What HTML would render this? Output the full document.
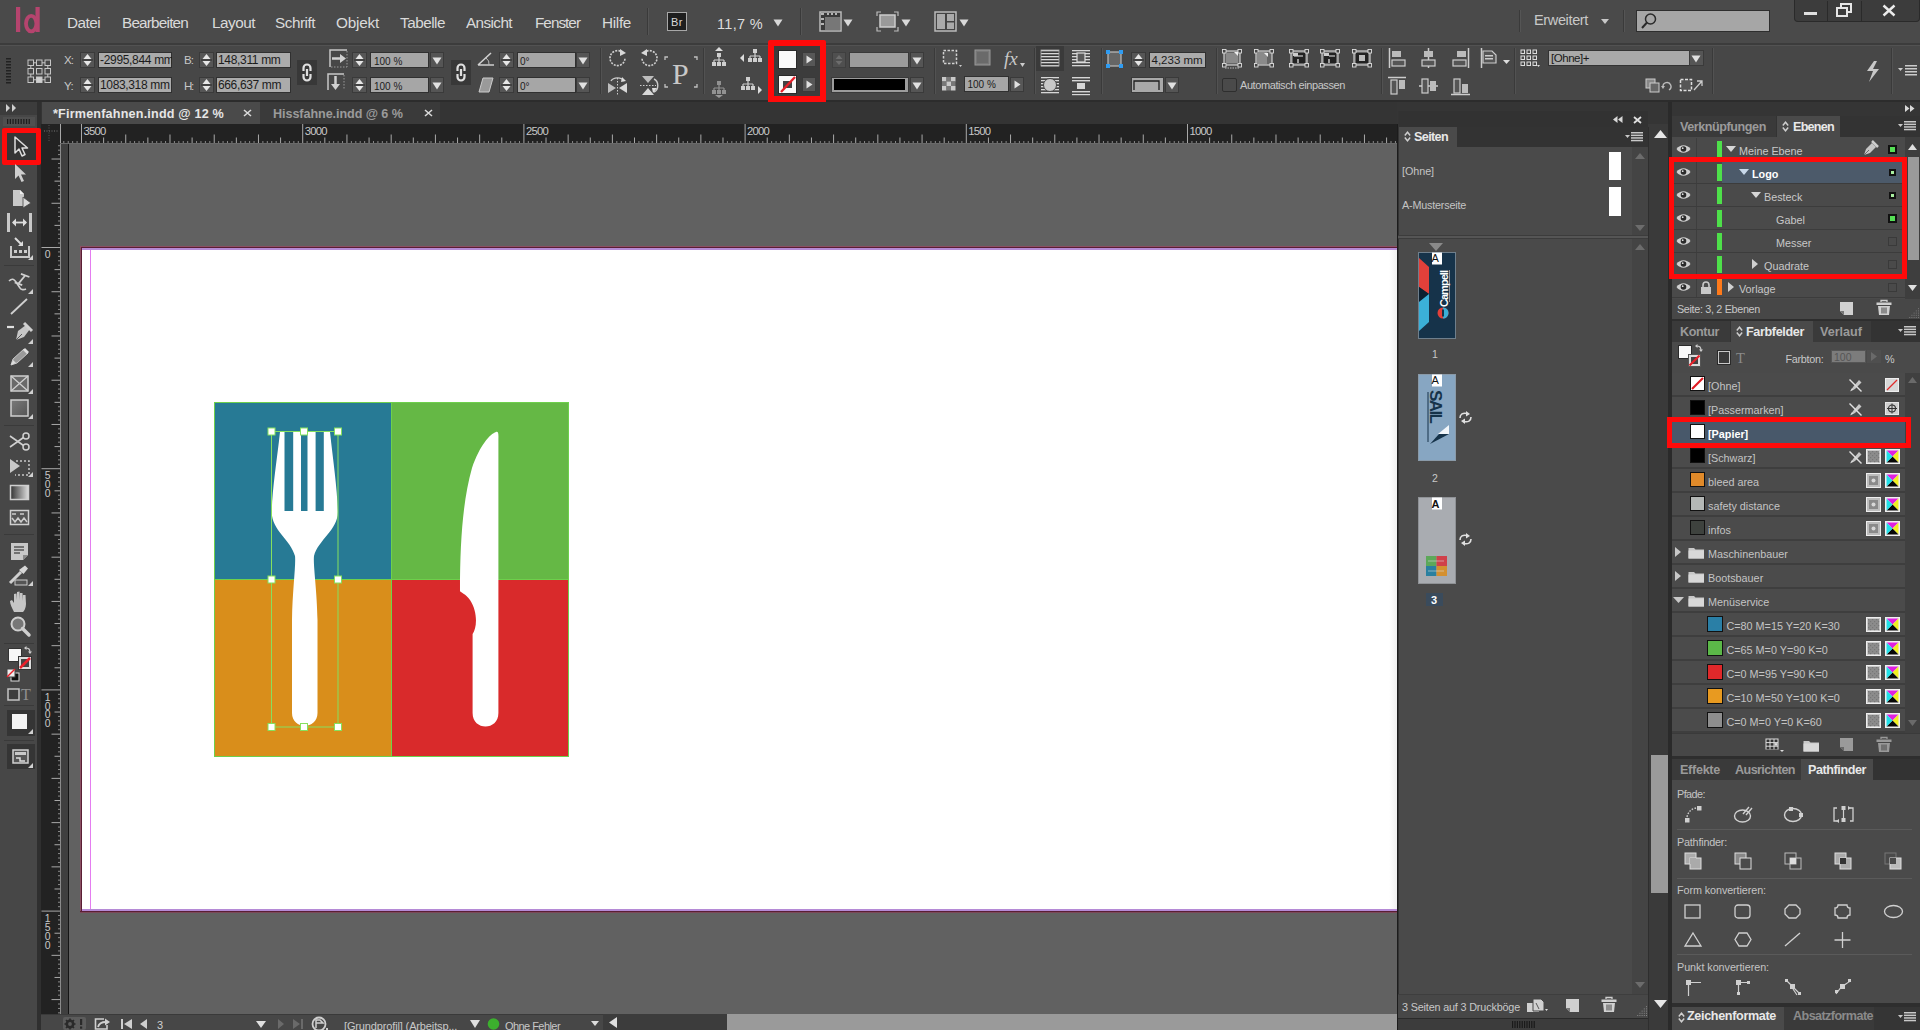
<!DOCTYPE html>
<html><head><meta charset="utf-8"><style>*{margin:0;padding:0;box-sizing:border-box}
html,body{width:1920px;height:1030px;overflow:hidden;background:#474747;font-family:"Liberation Sans",sans-serif;color:#d0d0d0;position:relative}
.a{position:absolute}
.t{position:absolute;white-space:nowrap;line-height:1}
svg{overflow:visible}
</style></head><body>
<!-- s1_menu -->
<div class="a" style="left:0px;top:0px;width:1920px;height:43px;background:#4a4a4a;"></div>
<div class="a" style="left:0px;top:43px;width:1920px;height:2px;background:#3c3c3c;"></div>
<svg class="a" style="left:12px;top:4px;" width="32" height="32" viewBox="0 0 32 32"><rect x="4" y="3" width="4.2" height="25" fill="#b5446e"/><rect x="23.5" y="3" width="4.2" height="25" fill="#b5446e"/><ellipse cx="19.2" cy="19.6" rx="5.2" ry="7.8" fill="none" stroke="#b5446e" stroke-width="3.8"/></svg>
<div class="t" style="left:67.0px;top:14.5px;font-size:15.3px;color:#dadada;letter-spacing:-0.54px;">Datei</div>
<div class="t" style="left:122.0px;top:14.5px;font-size:15.3px;color:#dadada;letter-spacing:-0.80px;">Bearbeiten</div>
<div class="t" style="left:212.0px;top:14.5px;font-size:15.3px;color:#dadada;letter-spacing:-0.49px;">Layout</div>
<div class="t" style="left:275.0px;top:14.5px;font-size:15.3px;color:#dadada;letter-spacing:-0.48px;">Schrift</div>
<div class="t" style="left:336.0px;top:14.5px;font-size:15.3px;color:#dadada;letter-spacing:-0.20px;">Objekt</div>
<div class="t" style="left:400.0px;top:14.5px;font-size:15.3px;color:#dadada;letter-spacing:-0.50px;">Tabelle</div>
<div class="t" style="left:466.0px;top:14.5px;font-size:15.3px;color:#dadada;letter-spacing:-0.60px;">Ansicht</div>
<div class="t" style="left:535.0px;top:14.5px;font-size:15.3px;color:#dadada;letter-spacing:-0.98px;">Fenster</div>
<div class="t" style="left:602.0px;top:14.5px;font-size:15.3px;color:#dadada;letter-spacing:-0.32px;">Hilfe</div>
<div class="a" style="left:647px;top:8px;width:1px;height:27px;background:#3a3a3a;"></div>
<div class="a" style="left:648px;top:8px;width:1px;height:27px;background:#555;"></div>
<div class="a" style="left:667px;top:12px;width:20px;height:19px;background:#1e1e1e;border:1.5px solid #a8a8a8"></div>
<div class="t" style="left:671.0px;top:16.7px;font-size:11px;color:#d8d8d8;letter-spacing:0.50px;">Br</div>
<div class="t" style="left:717.0px;top:16.7px;font-size:14.5px;color:#dedede;letter-spacing:0.32px;">11,7 %</div>
<svg class="a" style="left:773px;top:19px;" width="10" height="8" viewBox="0 0 10 8"><path d="M0.5 0.5 L9.5 0.5 L5 7.5Z" fill="#d8d8d8"/></svg>
<div class="a" style="left:800px;top:8px;width:1px;height:27px;background:#3a3a3a;"></div>
<div class="a" style="left:801px;top:8px;width:1px;height:27px;background:#555;"></div>
<svg class="a" style="left:819px;top:11px;" width="24" height="22" viewBox="0 0 24 22"><rect x="1" y="1" width="21" height="19" fill="#3a3a3a" stroke="#bbb" stroke-width="1.5"/><rect x="6" y="6" width="15" height="13" fill="#777"/><path d="M2 3h3M2 8h3M2 13h3M8 3h2M12 3h2M16 3h2" stroke="#ddd" stroke-width="1.5"/></svg>
<svg class="a" style="left:843px;top:19px;" width="10" height="8" viewBox="0 0 10 8"><path d="M0.5 0.5 L9.5 0.5 L5 7.5Z" fill="#d8d8d8"/></svg>
<svg class="a" style="left:876px;top:11px;" width="24" height="22" viewBox="0 0 24 22"><rect x="4" y="4" width="15" height="12" fill="#9a9a9a" stroke="#ccc" stroke-width="1.5"/><path d="M1 5V1h4M18 1h4v4M1 16v4h4M22 16v4h-4" fill="none" stroke="#bbb" stroke-width="1.2"/></svg>
<svg class="a" style="left:901px;top:19px;" width="10" height="8" viewBox="0 0 10 8"><path d="M0.5 0.5 L9.5 0.5 L5 7.5Z" fill="#d8d8d8"/></svg>
<svg class="a" style="left:934px;top:11px;" width="24" height="22" viewBox="0 0 24 22"><rect x="1" y="1" width="21" height="19" fill="#444" stroke="#bbb" stroke-width="1.5"/><rect x="3" y="3" width="8" height="15" fill="#aaa"/><rect x="13" y="3" width="7" height="7" fill="#aaa"/><rect x="13" y="11.5" width="7" height="6.5" fill="#aaa"/></svg>
<svg class="a" style="left:959px;top:19px;" width="10" height="8" viewBox="0 0 10 8"><path d="M0.5 0.5 L9.5 0.5 L5 7.5Z" fill="#d8d8d8"/></svg>
<div class="a" style="left:1519px;top:10px;width:1px;height:22px;background:#3a3a3a;"></div>
<div class="a" style="left:1520px;top:10px;width:1px;height:22px;background:#555;"></div>
<div class="t" style="left:1534.0px;top:13.2px;font-size:14.5px;color:#c8c8c8;letter-spacing:-0.36px;">Erweitert</div>
<svg class="a" style="left:1601px;top:19px;" width="8" height="5" viewBox="0 0 8 5"><path d="M0 0 L8 0 L4 5Z" fill="#c8c8c8"/></svg>
<div class="a" style="left:1623px;top:10px;width:1px;height:22px;background:#3a3a3a;"></div>
<div class="a" style="left:1624px;top:10px;width:1px;height:22px;background:#555;"></div>
<div class="a" style="left:1636px;top:10px;width:134px;height:22px;background:#a6a6a6;border:1px solid #2e2e2e"></div>
<svg class="a" style="left:1640px;top:12px;" width="18" height="18" viewBox="0 0 18 18"><circle cx="10.5" cy="7" r="5" fill="none" stroke="#2a2a2a" stroke-width="1.5"/><path d="M7 10.5 L2 16" stroke="#2a2a2a" stroke-width="2"/></svg>
<div class="a" style="left:1794px;top:0px;width:126px;height:22px;background:#3c3c3c;border-radius:0 0 4px 4px;border:1px solid #2a2a2a;border-top:none"></div>
<div class="a" style="left:1827px;top:1px;width:1px;height:20px;background:#2a2a2a;"></div>
<div class="a" style="left:1861px;top:1px;width:1px;height:20px;background:#2a2a2a;"></div>
<div class="a" style="left:1804px;top:12px;width:13px;height:3px;background:#e0e0e0;"></div>
<svg class="a" style="left:1836px;top:3px;" width="18" height="15" viewBox="0 0 18 15"><rect x="5" y="1" width="10" height="8" fill="none" stroke="#e6e6e6" stroke-width="2"/><rect x="1" y="5" width="10" height="8" fill="#3c3c3c" stroke="#e6e6e6" stroke-width="2"/></svg>
<svg class="a" style="left:1882px;top:4px;" width="14" height="13" viewBox="0 0 14 13"><path d="M1.5 1.5 L12.5 11.5 M12.5 1.5 L1.5 11.5" stroke="#ececec" stroke-width="2.4"/></svg>
<!-- s2_ctrl -->
<div class="a" style="left:0px;top:45px;width:1920px;height:55px;background:#474747;"></div>
<div class="a" style="left:0px;top:45px;width:1920px;height:1px;background:#525252;"></div>
<svg class="a" style="left:5px;top:58px;" width="8" height="27" viewBox="0 0 8 27"><rect x="1" y="0" width="5" height="1.5" fill="#222"/><rect x="1" y="3" width="5" height="1.5" fill="#222"/><rect x="1" y="6" width="5" height="1.5" fill="#222"/><rect x="1" y="9" width="5" height="1.5" fill="#222"/><rect x="1" y="12" width="5" height="1.5" fill="#222"/><rect x="1" y="15" width="5" height="1.5" fill="#222"/><rect x="1" y="18" width="5" height="1.5" fill="#222"/><rect x="1" y="21" width="5" height="1.5" fill="#222"/><rect x="1" y="24" width="5" height="1.5" fill="#222"/></svg>
<svg class="a" style="left:27px;top:59px;" width="24" height="24" viewBox="0 0 24 24"><rect x="1.0" y="1.0" width="5.5" height="5.5" fill="none" stroke="#c6c6c6" stroke-width="1"/><rect x="9.5" y="1.0" width="5.5" height="5.5" fill="none" stroke="#c6c6c6" stroke-width="1"/><rect x="18.0" y="1.0" width="5.5" height="5.5" fill="none" stroke="#c6c6c6" stroke-width="1"/><rect x="1.0" y="9.5" width="5.5" height="5.5" fill="none" stroke="#c6c6c6" stroke-width="1"/><rect x="9.5" y="9.5" width="5.5" height="5.5" fill="none" stroke="#c6c6c6" stroke-width="1"/><rect x="18.0" y="9.5" width="5.5" height="5.5" fill="none" stroke="#c6c6c6" stroke-width="1"/><rect x="1.0" y="18.0" width="5.5" height="5.5" fill="none" stroke="#c6c6c6" stroke-width="1"/><rect x="9.5" y="18.0" width="5.5" height="5.5" fill="#cfcfcf" stroke="#c6c6c6" stroke-width="1"/><rect x="18.0" y="18.0" width="5.5" height="5.5" fill="none" stroke="#c6c6c6" stroke-width="1"/><path d="M6.5 3.8h3M15 3.8h3M6.5 20.8h3M15 20.8h3M3.8 6.5v3M3.8 15v3M20.8 6.5v3M20.8 15v3" stroke="#c6c6c6" stroke-width="1"/></svg>
<div class="t" style="left:64.0px;top:54.2px;font-size:11.6px;color:#c8c8c8;letter-spacing:-0.98px;">X:</div>
<div class="t" style="left:64.0px;top:80.2px;font-size:11.6px;color:#c8c8c8;letter-spacing:-0.66px;">Y:</div>
<div class="a" style="left:80px;top:52px;width:15px;height:16px;background:#565656;border:1px solid #3a3a3a"></div>
<svg class="a" style="left:80px;top:52px;" width="15" height="16" viewBox="0 0 15 16"><path d="M3.5 7 L7.5 2 L11.5 7Z" fill="#e6e6e6"/><path d="M3.5 9 L7.5 14 L11.5 9Z" fill="#e6e6e6"/><rect x="2" y="7.5" width="11" height="1" fill="#2e2e2e"/></svg>
<div class="a" style="left:98px;top:52px;width:74px;height:16px;background:#ababab;border:1px solid #303030;overflow:hidden"></div>
<div class="a" style="left:98px;top:52px;width:74px;height:16px;overflow:hidden"><div class="t" style="left:2.0px;top:2.1px;font-size:12px;color:#1c1c1c;letter-spacing:-0.32px;">-2995,844 mm</div>
</div>
<div class="a" style="left:80px;top:77px;width:15px;height:16px;background:#565656;border:1px solid #3a3a3a"></div>
<svg class="a" style="left:80px;top:77px;" width="15" height="16" viewBox="0 0 15 16"><path d="M3.5 7 L7.5 2 L11.5 7Z" fill="#e6e6e6"/><path d="M3.5 9 L7.5 14 L11.5 9Z" fill="#e6e6e6"/><rect x="2" y="7.5" width="11" height="1" fill="#2e2e2e"/></svg>
<div class="a" style="left:98px;top:77px;width:74px;height:16px;background:#ababab;border:1px solid #303030;overflow:hidden"></div>
<div class="a" style="left:98px;top:77px;width:74px;height:16px;overflow:hidden"><div class="t" style="left:2.0px;top:2.1px;font-size:12px;color:#1c1c1c;letter-spacing:-0.35px;">1083,318 mm</div>
</div>
<div class="t" style="left:184.0px;top:54.2px;font-size:11.6px;color:#c8c8c8;letter-spacing:-0.98px;">B:</div>
<div class="t" style="left:184.0px;top:80.2px;font-size:11.6px;color:#c8c8c8;letter-spacing:-1.30px;">H:</div>
<div class="a" style="left:199px;top:52px;width:15px;height:16px;background:#565656;border:1px solid #3a3a3a"></div>
<svg class="a" style="left:199px;top:52px;" width="15" height="16" viewBox="0 0 15 16"><path d="M3.5 7 L7.5 2 L11.5 7Z" fill="#e6e6e6"/><path d="M3.5 9 L7.5 14 L11.5 9Z" fill="#e6e6e6"/><rect x="2" y="7.5" width="11" height="1" fill="#2e2e2e"/></svg>
<div class="a" style="left:216px;top:52px;width:75px;height:16px;background:#ababab;border:1px solid #303030;overflow:hidden"></div>
<div class="a" style="left:216px;top:52px;width:75px;height:16px;overflow:hidden"><div class="t" style="left:2.0px;top:2.1px;font-size:12px;color:#1c1c1c;letter-spacing:-0.33px;">148,311 mm</div>
</div>
<div class="a" style="left:199px;top:77px;width:15px;height:16px;background:#565656;border:1px solid #3a3a3a"></div>
<svg class="a" style="left:199px;top:77px;" width="15" height="16" viewBox="0 0 15 16"><path d="M3.5 7 L7.5 2 L11.5 7Z" fill="#e6e6e6"/><path d="M3.5 9 L7.5 14 L11.5 9Z" fill="#e6e6e6"/><rect x="2" y="7.5" width="11" height="1" fill="#2e2e2e"/></svg>
<div class="a" style="left:216px;top:77px;width:75px;height:16px;background:#ababab;border:1px solid #303030;overflow:hidden"></div>
<div class="a" style="left:216px;top:77px;width:75px;height:16px;overflow:hidden"><div class="t" style="left:2.0px;top:2.1px;font-size:12px;color:#1c1c1c;letter-spacing:-0.37px;">666,637 mm</div>
</div>
<svg class="a" style="left:297px;top:60px;" width="20" height="25" viewBox="0 0 20 25"><rect width="20" height="25" fill="#383838"/><path d="M6.5 11 V8 a3.5 3.5 0 0 1 7 0 V11 M6.5 14 V17 a3.5 3.5 0 0 0 7 0 V14 M10 9 V16" fill="none" stroke="#e0e0e0" stroke-width="2.2"/></svg>
<svg class="a" style="left:329px;top:49px;" width="20" height="19" viewBox="0 0 20 19"><path d="M1 18V1h17" fill="none" stroke="#c8c8c8" stroke-width="1.5"/><path d="M18 2v16M2 18h16" stroke="#999" stroke-width="1" stroke-dasharray="1.5 1.5"/><path d="M3 9.5h9" stroke="#d0d0d0" stroke-width="2.5"/><path d="M11 5 L17 9.5 L11 14Z" fill="#d0d0d0"/></svg>
<svg class="a" style="left:327px;top:73px;" width="18" height="18" viewBox="0 0 18 18"><path d="M1 17V1h16" fill="none" stroke="#c8c8c8" stroke-width="1.5"/><path d="M17 2v15" stroke="#999" stroke-width="1" stroke-dasharray="1.5 1.5"/><path d="M8.5 3v9" stroke="#d0d0d0" stroke-width="2.5"/><path d="M4 11 L8.5 17 L13 11Z" fill="#d0d0d0"/></svg>
<div class="a" style="left:352px;top:52px;width:15px;height:16px;background:#565656;border:1px solid #3a3a3a"></div>
<svg class="a" style="left:352px;top:52px;" width="15" height="16" viewBox="0 0 15 16"><path d="M3.5 7 L7.5 2 L11.5 7Z" fill="#e6e6e6"/><path d="M3.5 9 L7.5 14 L11.5 9Z" fill="#e6e6e6"/><rect x="2" y="7.5" width="11" height="1" fill="#2e2e2e"/></svg>
<div class="a" style="left:370px;top:52px;width:59px;height:16px;background:#a6a6a6;border:1px solid #303030;overflow:hidden"></div>
<div class="a" style="left:370px;top:52px;width:59px;height:16px;overflow:hidden"><div class="t" style="left:4.0px;top:4.5px;font-size:10px;color:#1c1c1c;">100 %</div>
</div>
<div class="a" style="left:430px;top:52px;width:14px;height:16px;background:#555;border:1px solid #3a3a3a"></div>
<svg class="a" style="left:432px;top:57px;" width="10" height="8" viewBox="0 0 10 8"><path d="M0.5 0.5 L9.5 0.5 L5 7.5Z" fill="#e0e0e0"/></svg>
<div class="a" style="left:352px;top:77px;width:15px;height:16px;background:#565656;border:1px solid #3a3a3a"></div>
<svg class="a" style="left:352px;top:77px;" width="15" height="16" viewBox="0 0 15 16"><path d="M3.5 7 L7.5 2 L11.5 7Z" fill="#e6e6e6"/><path d="M3.5 9 L7.5 14 L11.5 9Z" fill="#e6e6e6"/><rect x="2" y="7.5" width="11" height="1" fill="#2e2e2e"/></svg>
<div class="a" style="left:370px;top:77px;width:59px;height:16px;background:#a6a6a6;border:1px solid #303030;overflow:hidden"></div>
<div class="a" style="left:370px;top:77px;width:59px;height:16px;overflow:hidden"><div class="t" style="left:4.0px;top:5.0px;font-size:10px;color:#1c1c1c;">100 %</div>
</div>
<div class="a" style="left:430px;top:77px;width:14px;height:16px;background:#555;border:1px solid #3a3a3a"></div>
<svg class="a" style="left:432px;top:82px;" width="10" height="8" viewBox="0 0 10 8"><path d="M0.5 0.5 L9.5 0.5 L5 7.5Z" fill="#e0e0e0"/></svg>
<svg class="a" style="left:451px;top:60px;" width="20" height="25" viewBox="0 0 20 25"><rect width="20" height="25" fill="#383838"/><path d="M6.5 11 V8 a3.5 3.5 0 0 1 7 0 V11 M6.5 14 V17 a3.5 3.5 0 0 0 7 0 V14 M10 9 V16" fill="none" stroke="#e0e0e0" stroke-width="2.2"/></svg>
<svg class="a" style="left:477px;top:51px;" width="18" height="15" viewBox="0 0 18 15"><path d="M1 14 L14 2 M1 14 H17" stroke="#d0d0d0" stroke-width="1.6" fill="none"/><path d="M9 7 A7 7 0 0 1 12 14" fill="none" stroke="#bbb" stroke-width="1"/></svg>
<svg class="a" style="left:478px;top:77px;" width="16" height="16" viewBox="0 0 16 16"><path d="M1 15 L5 1 H15 L11 15Z" fill="#9a9a9a" stroke="#ccc" stroke-width="1"/></svg>
<div class="a" style="left:499px;top:52px;width:15px;height:16px;background:#565656;border:1px solid #3a3a3a"></div>
<svg class="a" style="left:499px;top:52px;" width="15" height="16" viewBox="0 0 15 16"><path d="M3.5 7 L7.5 2 L11.5 7Z" fill="#e6e6e6"/><path d="M3.5 9 L7.5 14 L11.5 9Z" fill="#e6e6e6"/><rect x="2" y="7.5" width="11" height="1" fill="#2e2e2e"/></svg>
<div class="a" style="left:517px;top:52px;width:59px;height:16px;background:#a6a6a6;border:1px solid #303030;overflow:hidden"></div>
<div class="a" style="left:517px;top:52px;width:59px;height:16px;overflow:hidden"><div class="t" style="left:3.0px;top:4.5px;font-size:10px;color:#1c1c1c;">0°</div>
</div>
<div class="a" style="left:576px;top:52px;width:14px;height:16px;background:#555;border:1px solid #3a3a3a"></div>
<svg class="a" style="left:578px;top:57px;" width="10" height="8" viewBox="0 0 10 8"><path d="M0.5 0.5 L9.5 0.5 L5 7.5Z" fill="#e0e0e0"/></svg>
<div class="a" style="left:499px;top:77px;width:15px;height:16px;background:#565656;border:1px solid #3a3a3a"></div>
<svg class="a" style="left:499px;top:77px;" width="15" height="16" viewBox="0 0 15 16"><path d="M3.5 7 L7.5 2 L11.5 7Z" fill="#e6e6e6"/><path d="M3.5 9 L7.5 14 L11.5 9Z" fill="#e6e6e6"/><rect x="2" y="7.5" width="11" height="1" fill="#2e2e2e"/></svg>
<div class="a" style="left:517px;top:77px;width:59px;height:16px;background:#a6a6a6;border:1px solid #303030;overflow:hidden"></div>
<div class="a" style="left:517px;top:77px;width:59px;height:16px;overflow:hidden"><div class="t" style="left:3.0px;top:5.0px;font-size:10px;color:#1c1c1c;">0°</div>
</div>
<div class="a" style="left:576px;top:77px;width:14px;height:16px;background:#555;border:1px solid #3a3a3a"></div>
<svg class="a" style="left:578px;top:82px;" width="10" height="8" viewBox="0 0 10 8"><path d="M0.5 0.5 L9.5 0.5 L5 7.5Z" fill="#e0e0e0"/></svg>
<div class="a" style="left:600px;top:48px;width:1px;height:46px;background:#3a3a3a;"></div>
<div class="a" style="left:601px;top:48px;width:1px;height:46px;background:#525252;"></div>
<svg class="a" style="left:608px;top:48px;" width="20" height="19" viewBox="0 0 20 19"><path d="M15 5 A7.5 7.5 0 1 0 17 10" fill="none" stroke="#cfcfcf" stroke-width="1.6" stroke-dasharray="2 1.2"/><path d="M12 1 L18 5 L12 8Z" fill="#d8d8d8"/></svg>
<svg class="a" style="left:639px;top:48px;" width="20" height="19" viewBox="0 0 20 19"><g transform="translate(20,0) scale(-1,1)"><path d="M15 5 A7.5 7.5 0 1 0 17 10" fill="none" stroke="#cfcfcf" stroke-width="1.6" stroke-dasharray="2 1.2"/><path d="M12 1 L18 5 L12 8Z" fill="#d8d8d8"/></g></svg>
<svg class="a" style="left:607px;top:75px;" width="21" height="21" viewBox="0 0 21 21"><path d="M1 8 L9 13 L1 18Z" fill="#bdbdbd"/><path d="M20 8 L12 13 L20 18Z" fill="#d8d8d8"/><path d="M10.5 3v18" stroke="#ccc" stroke-dasharray="1.5 1.5"/><path d="M4 6 A7 5 0 0 1 17 6" fill="none" stroke="#ccc" stroke-width="1.4"/><path d="M15 2 L19 6 L14 7Z" fill="#ddd"/></svg>
<svg class="a" style="left:639px;top:75px;" width="21" height="21" viewBox="0 0 21 21"><path d="M3 1 L15 1 L9 8Z" fill="#bdbdbd"/><path d="M3 20 L15 20 L9 13Z" fill="#d8d8d8"/><path d="M1 10.5h16" stroke="#ccc" stroke-dasharray="1.5 1.5"/><path d="M15 4 A6 7 0 0 1 15 17" fill="none" stroke="#ccc" stroke-width="1.4"/><path d="M18 13 L14 18 L13 13Z" fill="#ddd"/></svg>
<svg class="a" style="left:664px;top:56px;" width="34" height="32" viewBox="0 0 34 32"><path d="M1 4V1h3M30 1h3v3M1 28v3h3M33 28v3h-3" fill="none" stroke="#c0c0c0" stroke-width="1.3"/></svg>
<div class="t" style="left:672.0px;top:58.6px;font-size:30px;color:#c8c8c8;font-family:'Liberation Serif',serif;">P</div>
<div class="a" style="left:703px;top:48px;width:1px;height:46px;background:#3a3a3a;"></div>
<div class="a" style="left:704px;top:48px;width:1px;height:46px;background:#525252;"></div>
<svg class="a" style="left:711px;top:47px;" width="17" height="20" viewBox="0 0 17 20"><path d="M4 4 L8 0 L12 4Z" fill="#dcdcdc"/><rect x="6" y="6" width="4" height="4" fill="#cfcfcf"/><path d="M8 10v3M3 13h10M3 13v3M8 13v3M13 13v3" stroke="#cfcfcf" stroke-width="1.2" fill="none"/><rect x="1" y="15" width="4" height="4" fill="#cfcfcf"/><rect x="6" y="15" width="4" height="4" fill="#cfcfcf"/><rect x="11" y="15" width="4" height="4" fill="#cfcfcf"/></svg>
<svg class="a" style="left:740px;top:47px;" width="24" height="20" viewBox="0 0 24 20"><path d="M0 11 L4 7 L4 15Z" fill="#dcdcdc"/><g transform="translate(7,-4)"><rect x="6" y="6" width="4" height="4" fill="#cfcfcf"/><path d="M8 10v3M3 13h10M3 13v3M8 13v3M13 13v3" stroke="#cfcfcf" stroke-width="1.2" fill="none"/><rect x="1" y="15" width="4" height="4" fill="#cfcfcf"/><rect x="6" y="15" width="4" height="4" fill="#cfcfcf"/><rect x="11" y="15" width="4" height="4" fill="#cfcfcf"/></g></svg>
<svg class="a" style="left:711px;top:75px;" width="17" height="21" viewBox="0 0 17 21"><g opacity="0.55"><rect x="6" y="6" width="4" height="4" fill="#cfcfcf"/><path d="M8 10v3M3 13h10M3 13v3M8 13v3M13 13v3" stroke="#cfcfcf" stroke-width="1.2" fill="none"/><rect x="1" y="15" width="4" height="4" fill="#cfcfcf"/><rect x="6" y="15" width="4" height="4" fill="#cfcfcf"/><rect x="11" y="15" width="4" height="4" fill="#cfcfcf"/><path d="M4 20 L8 23 L12 20Z" fill="#dcdcdc"/></g></svg>
<svg class="a" style="left:740px;top:75px;" width="24" height="21" viewBox="0 0 24 21"><g transform="translate(0,-4)"><rect x="6" y="6" width="4" height="4" fill="#cfcfcf"/><path d="M8 10v3M3 13h10M3 13v3M8 13v3M13 13v3" stroke="#cfcfcf" stroke-width="1.2" fill="none"/><rect x="1" y="15" width="4" height="4" fill="#cfcfcf"/><rect x="6" y="15" width="4" height="4" fill="#cfcfcf"/><rect x="11" y="15" width="4" height="4" fill="#cfcfcf"/></g><path d="M18 11 L22 15 L18 19Z" fill="#dcdcdc"/></svg>
<div class="a" style="left:773px;top:46px;width:48px;height:50px;background:#3c3c3c;"></div>
<div class="a" style="left:778px;top:50px;width:19px;height:19px;background:#fafafa;border:1px solid #2a2a2a"></div>
<div class="a" style="left:802px;top:52px;width:14px;height:15px;background:#575757;border:1px solid #3a3a3a"></div>
<svg class="a" style="left:806px;top:55px;" width="7" height="9" viewBox="0 0 7 9"><path d="M0.5 0.5 L6.5 4.5 L0.5 8.5Z" fill="#e0e0e0"/></svg>
<div class="a" style="left:778px;top:75px;width:19px;height:19px;background:#fafafa;border:1px solid #2a2a2a"></div>
<svg class="a" style="left:778px;top:75px;" width="19" height="19" viewBox="0 0 19 19"><rect x="5" y="6" width="9" height="7" fill="#444"/><path d="M3 17 L17 2" stroke="#e8202a" stroke-width="2.4"/></svg>
<div class="a" style="left:802px;top:77px;width:14px;height:15px;background:#575757;border:1px solid #3a3a3a"></div>
<svg class="a" style="left:806px;top:80px;" width="7" height="9" viewBox="0 0 7 9"><path d="M0.5 0.5 L6.5 4.5 L0.5 8.5Z" fill="#e0e0e0"/></svg>
<div class="a" style="left:768px;top:40px;width:58px;height:62px;background:transparent;border:6px solid #ff0a0a;border-radius:2px"></div>
<div class="a" style="left:832px;top:52px;width:14px;height:16px;background:#4f4f4f;border:1px solid #3f3f3f"></div>
<svg class="a" style="left:832px;top:52px;" width="14" height="16" viewBox="0 0 14 16"><path d="M3.5 7 L7 3 L10.5 7Z" fill="#6d6d6d"/><path d="M3.5 9 L7 13 L10.5 9Z" fill="#6d6d6d"/></svg>
<div class="a" style="left:849px;top:52px;width:60px;height:16px;background:#9c9c9c;border:1px solid #3a3a3a"></div>
<div class="a" style="left:910px;top:52px;width:14px;height:16px;background:#555;border:1px solid #3a3a3a"></div>
<svg class="a" style="left:912px;top:57px;" width="10" height="8" viewBox="0 0 10 8"><path d="M0.5 0.5 L9.5 0.5 L5 7.5Z" fill="#e0e0e0"/></svg>
<div class="a" style="left:831px;top:77px;width:78px;height:16px;background:#9c9c9c;border:1px solid #3a3a3a"></div>
<div class="a" style="left:834px;top:79px;width:71px;height:11px;background:#000;"></div>
<div class="a" style="left:910px;top:77px;width:14px;height:16px;background:#555;border:1px solid #3a3a3a"></div>
<svg class="a" style="left:912px;top:82px;" width="10" height="8" viewBox="0 0 10 8"><path d="M0.5 0.5 L9.5 0.5 L5 7.5Z" fill="#e0e0e0"/></svg>
<div class="a" style="left:934px;top:48px;width:1px;height:46px;background:#3a3a3a;"></div>
<div class="a" style="left:935px;top:48px;width:1px;height:46px;background:#525252;"></div>
<svg class="a" style="left:942px;top:49px;" width="22" height="19" viewBox="0 0 22 19"><rect x="1.5" y="1.5" width="13" height="13" fill="#555" stroke="#d0d0d0" stroke-width="1.5" stroke-dasharray="2.5 1.5"/><path d="M17 16 L20 16 L18.5 18Z" fill="#ccc"/></svg>
<svg class="a" style="left:974px;top:49px;" width="18" height="17" viewBox="0 0 18 17"><rect x="1" y="1" width="15" height="15" fill="#777" stroke="#9a9a9a" stroke-width="1"/><rect x="3" y="3" width="11" height="11" fill="#6a6a6a"/></svg>
<div class="t" style="left:1004.0px;top:48.9px;font-size:19px;color:#c8c8c8;font-style:italic;font-family:'Liberation Serif',serif;">fx</div>
<svg class="a" style="left:1020px;top:63px;" width="5" height="4" viewBox="0 0 5 4"><path d="M0 0 L5 0 L2.5 4Z" fill="#ccc"/></svg>
<svg class="a" style="left:941px;top:76px;" width="16" height="16" viewBox="0 0 16 16"><rect x="1.0" y="1.0" width="4.5" height="4.5" fill="#c8c8c8"/><rect x="5.5" y="1.0" width="4.5" height="4.5" fill="#777"/><rect x="10.0" y="1.0" width="4.5" height="4.5" fill="#c8c8c8"/><rect x="1.0" y="5.5" width="4.5" height="4.5" fill="#777"/><rect x="5.5" y="5.5" width="4.5" height="4.5" fill="#c8c8c8"/><rect x="10.0" y="5.5" width="4.5" height="4.5" fill="#777"/><rect x="1.0" y="10.0" width="4.5" height="4.5" fill="#c8c8c8"/><rect x="5.5" y="10.0" width="4.5" height="4.5" fill="#777"/><rect x="10.0" y="10.0" width="4.5" height="4.5" fill="#c8c8c8"/></svg>
<div class="a" style="left:964px;top:76px;width:45px;height:16px;background:#a6a6a6;border:1px solid #303030;overflow:hidden"></div>
<div class="a" style="left:964px;top:76px;width:45px;height:16px;overflow:hidden"><div class="t" style="left:3.5px;top:4.0px;font-size:10px;color:#1c1c1c;">100 %</div>
</div>
<div class="a" style="left:1010px;top:77px;width:14px;height:15px;background:#575757;border:1px solid #3a3a3a"></div>
<svg class="a" style="left:1014px;top:80px;" width="7" height="9" viewBox="0 0 7 9"><path d="M0.5 0.5 L6.5 4.5 L0.5 8.5Z" fill="#e0e0e0"/></svg>
<div class="a" style="left:1034px;top:48px;width:1px;height:46px;background:#3a3a3a;"></div>
<div class="a" style="left:1035px;top:48px;width:1px;height:46px;background:#525252;"></div>
<div class="a" style="left:1036px;top:46px;width:28px;height:25px;background:#3a3a3a;"></div>
<svg class="a" style="left:1040px;top:49px;" width="20" height="19" viewBox="0 0 20 19"><rect x="1" y="1" width="18" height="1.3" fill="#d6d6d6"/><rect x="1" y="4" width="18" height="1.3" fill="#d6d6d6"/><rect x="1" y="7" width="18" height="1.3" fill="#d6d6d6"/><rect x="1" y="10" width="18" height="1.3" fill="#d6d6d6"/><rect x="1" y="13" width="18" height="1.3" fill="#d6d6d6"/><rect x="1" y="16" width="18" height="1.3" fill="#d6d6d6"/><rect x="1" y="1" width="18" height="16" fill="none" stroke="#aaa" stroke-width="0.8"/></svg>
<svg class="a" style="left:1071px;top:49px;" width="20" height="18" viewBox="0 0 20 18"><rect x="1" y="1" width="18" height="1.3" fill="#d6d6d6"/><rect x="1" y="4" width="18" height="1.3" fill="#d6d6d6"/><rect x="1" y="7" width="18" height="1.3" fill="#d6d6d6"/><rect x="1" y="10" width="18" height="1.3" fill="#d6d6d6"/><rect x="1" y="13" width="18" height="1.3" fill="#d6d6d6"/><rect x="1" y="16" width="18" height="1.3" fill="#d6d6d6"/><rect x="6" y="4" width="8" height="9" fill="#5a5a5a" stroke="#ddd" stroke-width="1.2"/></svg>
<svg class="a" style="left:1040px;top:76px;" width="20" height="19" viewBox="0 0 20 19"><rect x="1" y="1" width="18" height="1.3" fill="#d6d6d6"/><rect x="1" y="4" width="18" height="1.3" fill="#d6d6d6"/><rect x="1" y="7" width="18" height="1.3" fill="#d6d6d6"/><rect x="1" y="10" width="18" height="1.3" fill="#d6d6d6"/><rect x="1" y="13" width="18" height="1.3" fill="#d6d6d6"/><rect x="1" y="16" width="18" height="1.3" fill="#d6d6d6"/><circle cx="10" cy="9" r="6.5" fill="#c8c8c8" stroke="#444" stroke-width="1"/></svg>
<svg class="a" style="left:1071px;top:76px;" width="20" height="19" viewBox="0 0 20 19"><rect x="1" y="1" width="18" height="1.4" fill="#d6d6d6"/><rect x="1" y="4" width="18" height="1.4" fill="#d6d6d6"/><rect x="6" y="7" width="8" height="6" fill="#d6d6d6"/><rect x="1" y="15" width="18" height="1.4" fill="#d6d6d6"/><rect x="1" y="18" width="18" height="1.2" fill="#d6d6d6"/></svg>
<div class="a" style="left:1101px;top:48px;width:1px;height:46px;background:#3a3a3a;"></div>
<div class="a" style="left:1102px;top:48px;width:1px;height:46px;background:#525252;"></div>
<svg class="a" style="left:1105px;top:49px;" width="19" height="20" viewBox="0 0 19 20"><rect x="3" y="3" width="13" height="14" fill="#666" stroke="#bdbdbd" stroke-width="1.2"/><rect x="1" y="1" width="4" height="4" fill="#2f9cf2"/><rect x="14" y="1" width="4" height="4" fill="#2f9cf2"/><rect x="1" y="15" width="4" height="4" fill="#2f9cf2"/><rect x="14" y="15" width="4" height="4" fill="#2f9cf2"/></svg>
<div class="a" style="left:1131px;top:52px;width:15px;height:16px;background:#565656;border:1px solid #3a3a3a"></div>
<svg class="a" style="left:1131px;top:52px;" width="15" height="16" viewBox="0 0 15 16"><path d="M3.5 7 L7.5 2 L11.5 7Z" fill="#e6e6e6"/><path d="M3.5 9 L7.5 14 L11.5 9Z" fill="#e6e6e6"/><rect x="2" y="7.5" width="11" height="1" fill="#2e2e2e"/></svg>
<div class="a" style="left:1149px;top:52px;width:57px;height:16px;background:#ababab;border:1px solid #303030;overflow:hidden"></div>
<div class="a" style="left:1149px;top:52px;width:57px;height:16px;overflow:hidden"><div class="t" style="left:2.5px;top:2.6px;font-size:11.5px;color:#1c1c1c;">4,233 mm</div>
</div>
<div class="a" style="left:1131px;top:77px;width:33px;height:16px;background:#a9a9a9;border:1px solid #3a3a3a"></div>
<svg class="a" style="left:1131px;top:77px;" width="33" height="16" viewBox="0 0 33 16"><path d="M3 13 V4 H28 V13" fill="none" stroke="#1e1e1e" stroke-width="1.3"/></svg>
<div class="a" style="left:1165px;top:77px;width:14px;height:16px;background:#555;border:1px solid #3a3a3a"></div>
<svg class="a" style="left:1167px;top:82px;" width="10" height="8" viewBox="0 0 10 8"><path d="M0.5 0.5 L9.5 0.5 L5 7.5Z" fill="#e0e0e0"/></svg>
<div class="a" style="left:1216px;top:48px;width:1px;height:46px;background:#3a3a3a;"></div>
<div class="a" style="left:1217px;top:48px;width:1px;height:46px;background:#525252;"></div>
<svg class="a" style="left:1222px;top:49px;" width="21" height="20" viewBox="0 0 21 20"><rect x="2" y="2" width="16" height="14" fill="#666" stroke="#cfcfcf" stroke-width="1.2"/><rect x="0.5" y="0.5" width="3.5" height="3.5" fill="#444" stroke="#ddd" stroke-width="0.9"/><rect x="16" y="0.5" width="3.5" height="3.5" fill="#444" stroke="#ddd" stroke-width="0.9"/><rect x="0.5" y="14.5" width="3.5" height="3.5" fill="#444" stroke="#ddd" stroke-width="0.9"/><rect x="16" y="14.5" width="3.5" height="3.5" fill="#444" stroke="#ddd" stroke-width="0.9"/><rect x="4" y="4" width="12" height="10" fill="#8a8a8a"/><path d="M3 19h14" stroke="#bbb" stroke-dasharray="1.5 1"/><path d="M12 3 L16 3 L16 7Z" fill="#eee"/></svg>
<svg class="a" style="left:1254px;top:49px;" width="21" height="20" viewBox="0 0 21 20"><rect x="2" y="2" width="16" height="14" fill="#666" stroke="#cfcfcf" stroke-width="1.2"/><rect x="0.5" y="0.5" width="3.5" height="3.5" fill="#444" stroke="#ddd" stroke-width="0.9"/><rect x="16" y="0.5" width="3.5" height="3.5" fill="#444" stroke="#ddd" stroke-width="0.9"/><rect x="0.5" y="14.5" width="3.5" height="3.5" fill="#444" stroke="#ddd" stroke-width="0.9"/><rect x="16" y="14.5" width="3.5" height="3.5" fill="#444" stroke="#ddd" stroke-width="0.9"/><rect x="3" y="3" width="10" height="12" fill="#8a8a8a"/><path d="M10 4 L14 4 L14 8Z" fill="#eee"/></svg>
<svg class="a" style="left:1289px;top:49px;" width="21" height="20" viewBox="0 0 21 20"><rect x="2" y="2" width="16" height="14" fill="#666" stroke="#cfcfcf" stroke-width="1.2"/><rect x="0.5" y="0.5" width="3.5" height="3.5" fill="#444" stroke="#ddd" stroke-width="0.9"/><rect x="16" y="0.5" width="3.5" height="3.5" fill="#444" stroke="#ddd" stroke-width="0.9"/><rect x="0.5" y="14.5" width="3.5" height="3.5" fill="#444" stroke="#ddd" stroke-width="0.9"/><rect x="16" y="14.5" width="3.5" height="3.5" fill="#444" stroke="#ddd" stroke-width="0.9"/><rect x="4" y="4" width="12" height="10" fill="#222"/><path d="M5 7h6M9 10v4M11 7 L14 7" stroke="#eee" stroke-width="1.2"/><rect x="4" y="4" width="5" height="3" fill="#ccc"/></svg>
<svg class="a" style="left:1320px;top:49px;" width="21" height="20" viewBox="0 0 21 20"><rect x="2" y="2" width="16" height="14" fill="#666" stroke="#cfcfcf" stroke-width="1.2"/><rect x="0.5" y="0.5" width="3.5" height="3.5" fill="#444" stroke="#ddd" stroke-width="0.9"/><rect x="16" y="0.5" width="3.5" height="3.5" fill="#444" stroke="#ddd" stroke-width="0.9"/><rect x="0.5" y="14.5" width="3.5" height="3.5" fill="#444" stroke="#ddd" stroke-width="0.9"/><rect x="16" y="14.5" width="3.5" height="3.5" fill="#444" stroke="#ddd" stroke-width="0.9"/><rect x="4" y="4" width="12" height="10" fill="#222"/><path d="M9 7h6M9 10v4" stroke="#eee" stroke-width="1.2"/><rect x="4" y="4" width="5" height="3" fill="#ccc"/></svg>
<svg class="a" style="left:1352px;top:49px;" width="21" height="20" viewBox="0 0 21 20"><rect x="2" y="2" width="16" height="14" fill="#666" stroke="#cfcfcf" stroke-width="1.2"/><rect x="0.5" y="0.5" width="3.5" height="3.5" fill="#444" stroke="#ddd" stroke-width="0.9"/><rect x="16" y="0.5" width="3.5" height="3.5" fill="#444" stroke="#ddd" stroke-width="0.9"/><rect x="0.5" y="14.5" width="3.5" height="3.5" fill="#444" stroke="#ddd" stroke-width="0.9"/><rect x="16" y="14.5" width="3.5" height="3.5" fill="#444" stroke="#ddd" stroke-width="0.9"/><rect x="4" y="4" width="12" height="10" fill="#222"/><rect x="7" y="6" width="6" height="6" fill="#bbb"/></svg>
<div class="a" style="left:1222px;top:78px;width:15px;height:14px;background:#4a4a4a;border:1px solid #2e2e2e;border-radius:2px"></div>
<div class="t" style="left:1240.0px;top:80.2px;font-size:11.0px;color:#c8c8c8;letter-spacing:-0.42px;">Automatisch einpassen</div>
<div class="a" style="left:1381px;top:48px;width:1px;height:46px;background:#3a3a3a;"></div>
<div class="a" style="left:1382px;top:48px;width:1px;height:46px;background:#525252;"></div>
<svg class="a" style="left:1388px;top:48px;" width="19" height="20" viewBox="0 0 19 20"><path d="M1.5 0v20" stroke="#ccc" stroke-width="1.5"/><rect x="4" y="3" width="9" height="6" fill="#bbb"/><rect x="4" y="12" width="13" height="6" fill="#555" stroke="#ccc" stroke-width="1.2"/></svg>
<svg class="a" style="left:1419px;top:48px;" width="19" height="20" viewBox="0 0 19 20"><path d="M9.5 0v20" stroke="#ccc" stroke-width="1.5"/><rect x="5" y="3" width="9" height="6" fill="#bbb"/><rect x="3" y="12" width="13" height="6" fill="#555" stroke="#ccc" stroke-width="1.2"/></svg>
<svg class="a" style="left:1451px;top:48px;" width="19" height="20" viewBox="0 0 19 20"><path d="M17.5 0v20" stroke="#ccc" stroke-width="1.5"/><rect x="6" y="3" width="9" height="6" fill="#bbb"/><rect x="2" y="12" width="13" height="6" fill="#555" stroke="#ccc" stroke-width="1.2"/></svg>
<svg class="a" style="left:1480px;top:48px;" width="18" height="20" viewBox="0 0 18 20"><path d="M1.5 0v20" stroke="#ccc" stroke-width="1.5"/><path d="M3 3h9l4 4v8H3Z" fill="#555" stroke="#ccc" stroke-width="1.2"/><rect x="5" y="7" width="8" height="1.5" fill="#ccc"/><rect x="5" y="10" width="8" height="1.5" fill="#ccc"/></svg>
<svg class="a" style="left:1503px;top:60px;" width="7" height="4" viewBox="0 0 7 4"><path d="M0 0 L7 0 L3.5 4Z" fill="#ddd"/></svg>
<svg class="a" style="left:1388px;top:76px;" width="19" height="20" viewBox="0 0 19 20"><path d="M0 1.5h18" stroke="#ccc" stroke-width="1.5"/><rect x="3" y="4" width="6" height="14" fill="#555" stroke="#ccc" stroke-width="1.2"/><rect x="11" y="4" width="6" height="9" fill="#bbb"/></svg>
<svg class="a" style="left:1419px;top:76px;" width="19" height="20" viewBox="0 0 19 20"><path d="M0 10h19" stroke="#ccc" stroke-width="1.5"/><rect x="3" y="3" width="6" height="14" fill="#555" stroke="#ccc" stroke-width="1.2"/><rect x="11" y="5" width="6" height="10" fill="#bbb"/></svg>
<svg class="a" style="left:1451px;top:76px;" width="19" height="20" viewBox="0 0 19 20"><path d="M0 18.5h19" stroke="#ccc" stroke-width="1.5"/><rect x="3" y="3" width="6" height="14" fill="#555" stroke="#ccc" stroke-width="1.2"/><rect x="11" y="8" width="6" height="9" fill="#bbb"/></svg>
<div class="a" style="left:1514px;top:48px;width:1px;height:46px;background:#3a3a3a;"></div>
<div class="a" style="left:1515px;top:48px;width:1px;height:46px;background:#525252;"></div>
<svg class="a" style="left:1520px;top:49px;" width="20" height="18" viewBox="0 0 20 18"><rect x="1" y="1" width="3.5" height="3.5" fill="none" stroke="#ddd" stroke-width="1"/><rect x="1" y="7" width="3.5" height="3.5" fill="none" stroke="#ddd" stroke-width="1"/><rect x="1" y="13" width="3.5" height="3.5" fill="none" stroke="#ddd" stroke-width="1"/><rect x="7" y="1" width="3.5" height="3.5" fill="none" stroke="#ddd" stroke-width="1"/><rect x="7" y="7" width="3.5" height="3.5" fill="none" stroke="#ddd" stroke-width="1"/><rect x="7" y="13" width="3.5" height="3.5" fill="none" stroke="#ddd" stroke-width="1"/><rect x="13" y="1" width="3.5" height="3.5" fill="none" stroke="#ddd" stroke-width="1"/><rect x="13" y="7" width="3.5" height="3.5" fill="none" stroke="#ddd" stroke-width="1"/><rect x="13" y="13" width="3.5" height="3.5" fill="none" stroke="#ddd" stroke-width="1"/><path d="M17 16 L20 16 L18.5 18Z" fill="#ddd"/></svg>
<div class="a" style="left:1548px;top:50px;width:142px;height:16px;background:#a9a9a9;border:1px solid #333"></div>
<div class="t" style="left:1551.0px;top:52.8px;font-size:11.5px;color:#1a1a1a;letter-spacing:-0.46px;">[Ohne]+</div>
<div class="a" style="left:1689px;top:50px;width:15px;height:16px;background:#555;border:1px solid #3a3a3a"></div>
<svg class="a" style="left:1691px;top:55px;" width="10" height="8" viewBox="0 0 10 8"><path d="M0.5 0.5 L9.5 0.5 L5 7.5Z" fill="#e0e0e0"/></svg>
<svg class="a" style="left:1645px;top:78px;" width="28" height="15" viewBox="0 0 28 15"><rect x="1" y="1" width="9" height="9" fill="#888" stroke="#ccc"/><rect x="5" y="5" width="9" height="9" fill="#666" stroke="#ccc"/><path d="M18 9 a4 4 0 1 1 6 3" fill="none" stroke="#bbb" stroke-width="1.4"/><path d="M16 8 L20 8 L18 11Z" fill="#bbb"/></svg>
<svg class="a" style="left:1679px;top:78px;" width="25" height="15" viewBox="0 0 25 15"><rect x="1.5" y="1.5" width="11" height="11" fill="#555" stroke="#ddd" stroke-width="1.5" stroke-dasharray="3 1.5"/><path d="M15 12 L23 3 M18 3h5v5" stroke="#ccc" stroke-width="1.3" fill="none"/></svg>
<div class="a" style="left:1712px;top:48px;width:1px;height:46px;background:#3a3a3a;"></div>
<div class="a" style="left:1713px;top:48px;width:1px;height:46px;background:#525252;"></div>
<svg class="a" style="left:1864px;top:61px;" width="18" height="21" viewBox="0 0 18 21"><path d="M10 0 L3 10 L9 10 L5 21 L15 8 L9 8 L13 0Z" fill="#c8c8c8"/></svg>
<div class="a" style="left:1891px;top:48px;width:1px;height:46px;background:#3a3a3a;"></div>
<div class="a" style="left:1892px;top:48px;width:1px;height:46px;background:#525252;"></div>
<svg class="a" style="left:1898px;top:65px;" width="20" height="11" viewBox="0 0 20 11"><path d="M0 3 L5 3 L2.5 6Z" fill="#ccc"/><rect x="7" y="0" width="12" height="1.5" fill="#ccc"/><rect x="7" y="3" width="12" height="1.5" fill="#ccc"/><rect x="7" y="6" width="12" height="1.5" fill="#ccc"/><rect x="7" y="9" width="12" height="1.5" fill="#ccc"/></svg>
<!-- s3_doc -->
<div class="a" style="left:0px;top:100px;width:1920px;height:2px;background:#2c2c2c;"></div>
<div class="a" style="left:768px;top:100px;width:58px;height:2px;background:#ff0a0a;"></div>
<div class="a" style="left:0px;top:102px;width:41px;height:928px;background:#474747;"></div>
<div class="a" style="left:37px;top:102px;width:4px;height:928px;background:#2f2f2f;"></div>
<div class="a" style="left:0px;top:102px;width:37px;height:13px;background:#3c3c3c;"></div>
<svg class="a" style="left:6px;top:104px;" width="12" height="9" viewBox="0 0 12 9"><path d="M0 0 L4 4 L0 8Z M6 0 L10 4 L6 8Z" fill="#cfcfcf"/></svg>
<div class="a" style="left:3px;top:117px;width:32px;height:9px;background:#4f4f4f;"></div>
<svg class="a" style="left:7px;top:119px;" width="24" height="5" viewBox="0 0 24 5"><rect x="0.0" y="0" width="1.3" height="5" fill="#1e1e1e"/><rect x="2.7" y="0" width="1.3" height="5" fill="#1e1e1e"/><rect x="5.4" y="0" width="1.3" height="5" fill="#1e1e1e"/><rect x="8.100000000000001" y="0" width="1.3" height="5" fill="#1e1e1e"/><rect x="10.8" y="0" width="1.3" height="5" fill="#1e1e1e"/><rect x="13.5" y="0" width="1.3" height="5" fill="#1e1e1e"/><rect x="16.200000000000003" y="0" width="1.3" height="5" fill="#1e1e1e"/><rect x="18.900000000000002" y="0" width="1.3" height="5" fill="#1e1e1e"/><rect x="21.6" y="0" width="1.3" height="5" fill="#1e1e1e"/></svg>
<div class="a" style="left:6px;top:133px;width:30px;height:27px;background:#353535;"></div>
<svg class="a" style="left:13px;top:136px;" width="16" height="21" viewBox="0 0 16 21"><path d="M2 1 L2 17 L6 13 L9 20 L12 18.5 L9 12 L14.5 12Z" fill="#333" stroke="#dedede" stroke-width="1.5" stroke-linejoin="round"/></svg>
<div class="a" style="left:2px;top:128px;width:39px;height:37px;background:transparent;border:5px solid #ff0a0a;border-radius:2px"></div>
<svg class="a" style="left:13px;top:163px;" width="16" height="20" viewBox="0 0 16 20"><path d="M2 1 L2 16 L5.5 12.5 L8.5 19 L11 18 L8 11.5 L13 11.5Z" fill="#cfcfcf"/></svg>
<svg class="a" style="left:12px;top:189px;" width="20" height="20" viewBox="0 0 20 20"><path d="M1 1 H8 L12 5 V17 H1Z" fill="#c8c8c8"/><path d="M8 1 V5 H12" fill="#eee"/><path d="M11 8 L19 14 L11 19Z" fill="#d8d8d8" stroke="#444" stroke-width="0.8"/></svg>
<svg class="a" style="left:6px;top:212px;" width="28" height="21" viewBox="0 0 28 21"><rect x="1" y="1" width="3" height="19" fill="#c8c8c8"/><rect x="23" y="1" width="3" height="19" fill="#c8c8c8"/><path d="M7 10.5 H20" stroke="#ddd" stroke-width="1.8"/><path d="M6 10.5 L10 6.5 V14.5Z M21 10.5 L17 6.5 V14.5Z" fill="#ddd"/></svg>
<svg class="a" style="left:10px;top:237px;" width="24" height="23" viewBox="0 0 24 23"><path d="M1 9 V20 H19 V9" fill="none" stroke="#c8c8c8" stroke-width="2"/><rect x="4" y="13" width="3" height="3" fill="#ccc"/><rect x="9" y="13" width="3" height="3" fill="#ccc"/><rect x="14" y="13" width="3" height="3" fill="#ccc"/><path d="M5 1 L12 8" stroke="#ddd" stroke-width="2"/><path d="M13 4 V9 H8Z" fill="#ddd"/></svg>
<svg class="a" style="left:28px;top:255px;" width="5" height="5" viewBox="0 0 5 5"><path d="M5 0 L5 5 L0 5Z" fill="#d0d0d0"/></svg>
<div class="a" style="left:4px;top:265px;width:30px;height:1px;background:#3a3a3a;"></div>
<svg class="a" style="left:8px;top:271px;" width="24" height="23" viewBox="0 0 24 23"><path d="M1 10 C4 7 6 8 8 11 L12 17 C13 19 16 19 18 18" fill="none" stroke="#d0d0d0" stroke-width="1.6"/><path d="M11 4 L20 4 M15.5 4 L12 14 M8 14h8" stroke="#d0d0d0" stroke-width="1.8" transform="rotate(20 15 9)"/></svg>
<svg class="a" style="left:28px;top:289px;" width="5" height="5" viewBox="0 0 5 5"><path d="M5 0 L5 5 L0 5Z" fill="#d0d0d0"/></svg>
<svg class="a" style="left:9px;top:297px;" width="20" height="19" viewBox="0 0 20 19"><path d="M2 17 L18 2" stroke="#d0d0d0" stroke-width="1.8"/></svg>
<svg class="a" style="left:6px;top:321px;" width="28" height="23" viewBox="0 0 28 23"><path d="M1 6h7" stroke="#e0e0e0" stroke-width="2.2"/><path d="M10 19 L12 10 L20 4 L24 8 L18 16Z" fill="#c6c6c6"/><path d="M18 2 L26 10" stroke="#d0d0d0" stroke-width="3"/><path d="M10 19 L16 13" stroke="#555" stroke-width="1"/></svg>
<svg class="a" style="left:28px;top:339px;" width="5" height="5" viewBox="0 0 5 5"><path d="M5 0 L5 5 L0 5Z" fill="#d0d0d0"/></svg>
<svg class="a" style="left:9px;top:347px;" width="22" height="20" viewBox="0 0 22 20"><path d="M2 18 L4 12 L15 2 L19 6 L8 16Z" fill="#9a9a9a" stroke="#c8c8c8" stroke-width="1"/><path d="M14 3 L18 7 L20 5 L16 1Z" fill="#ddd"/><path d="M2 18 L4 13 L7 16Z" fill="#ddd"/></svg>
<svg class="a" style="left:28px;top:362px;" width="5" height="5" viewBox="0 0 5 5"><path d="M5 0 L5 5 L0 5Z" fill="#d0d0d0"/></svg>
<svg class="a" style="left:10px;top:375px;" width="20" height="18" viewBox="0 0 20 18"><rect x="1" y="1" width="17" height="15" fill="#6a6a6a" stroke="#cfcfcf" stroke-width="1.5"/><path d="M1 1 L18 16 M18 1 L1 16" stroke="#cfcfcf" stroke-width="1.3"/></svg>
<svg class="a" style="left:28px;top:389px;" width="5" height="5" viewBox="0 0 5 5"><path d="M5 0 L5 5 L0 5Z" fill="#d0d0d0"/></svg>
<svg class="a" style="left:10px;top:399px;" width="20" height="19" viewBox="0 0 20 19"><defs><linearGradient id="gr1" x1="0" y1="0" x2="1" y2="1"><stop offset="0" stop-color="#7a7a7a"/><stop offset="1" stop-color="#555"/></linearGradient></defs><rect x="1" y="1" width="17" height="16" fill="url(#gr1)" stroke="#cfcfcf" stroke-width="1.5"/></svg>
<svg class="a" style="left:28px;top:414px;" width="5" height="5" viewBox="0 0 5 5"><path d="M5 0 L5 5 L0 5Z" fill="#d0d0d0"/></svg>
<div class="a" style="left:4px;top:425px;width:30px;height:1px;background:#3a3a3a;"></div>
<svg class="a" style="left:9px;top:432px;" width="22" height="19" viewBox="0 0 22 19"><circle cx="17" cy="4" r="3" fill="none" stroke="#d0d0d0" stroke-width="1.5"/><circle cx="17" cy="15" r="3" fill="none" stroke="#d0d0d0" stroke-width="1.5"/><path d="M1 4 L14.5 13.5 M1 15 L14.5 5.5" stroke="#d0d0d0" stroke-width="1.6"/></svg>
<svg class="a" style="left:9px;top:458px;" width="25" height="20" viewBox="0 0 25 20"><path d="M1 1 L1 15 L11 8Z" fill="#c8c8c8"/><path d="M7 3 H20 V17 H6" fill="none" stroke="#c8c8c8" stroke-width="1.5" stroke-dasharray="2 2"/></svg>
<svg class="a" style="left:28px;top:472px;" width="5" height="5" viewBox="0 0 5 5"><path d="M5 0 L5 5 L0 5Z" fill="#d0d0d0"/></svg>
<svg class="a" style="left:9px;top:484px;" width="22" height="17" viewBox="0 0 22 17"><defs><linearGradient id="gr2"><stop offset="0" stop-color="#333"/><stop offset="1" stop-color="#ddd"/></linearGradient></defs><rect x="1.5" y="1.5" width="18" height="14" fill="url(#gr2)" stroke="#cfcfcf" stroke-width="1.5"/></svg>
<svg class="a" style="left:9px;top:509px;" width="22" height="17" viewBox="0 0 22 17"><rect x="1.5" y="1.5" width="18" height="14" fill="#555" stroke="#cfcfcf" stroke-width="1.5"/><path d="M3 5 h4 M11 5 h4 M3 9 l3 4 l3-4 l3 4 l3-4 l3 4" stroke="#ccc" stroke-width="1.5" fill="none"/></svg>
<div class="a" style="left:4px;top:534px;width:30px;height:1px;background:#3a3a3a;"></div>
<svg class="a" style="left:10px;top:542px;" width="19" height="19" viewBox="0 0 19 19"><path d="M1 1 H18 V13 L13 18 H1Z" fill="#c8c8c8"/><path d="M4 5h10M4 8h10M4 11h6" stroke="#555" stroke-width="1.3"/><path d="M13 18 V13 H18" fill="#888"/></svg>
<svg class="a" style="left:7px;top:565px;" width="27" height="21" viewBox="0 0 27 21"><path d="M3 18 L14 7" stroke="#cfcfcf" stroke-width="3"/><path d="M12 5 L18 0.5 L21 3.5 L16.5 9" fill="#d6d6d6"/><rect x="8" y="15" width="12" height="5" fill="#555" stroke="#ccc" stroke-width="1"/></svg>
<svg class="a" style="left:28px;top:581px;" width="5" height="5" viewBox="0 0 5 5"><path d="M5 0 L5 5 L0 5Z" fill="#d0d0d0"/></svg>
<svg class="a" style="left:9px;top:591px;" width="21" height="22" viewBox="0 0 21 22"><path d="M5 21 C3 17 1 13 1 10 L3 9 L5 12 V3 L7.5 2.5 L8 9 V1 L10.5 0.5 L11 9 V2 L13.5 2 L14 10 V4 L16.5 4 L17 13 C17 17 15 20 14 21Z" fill="#c6c6c6"/></svg>
<svg class="a" style="left:10px;top:616px;" width="21" height="21" viewBox="0 0 21 21"><circle cx="8" cy="8" r="6.5" fill="#777" stroke="#cfcfcf" stroke-width="2"/><path d="M12.5 12.5 L19 19" stroke="#cfcfcf" stroke-width="3.5" stroke-linecap="round"/></svg>
<div class="a" style="left:4px;top:643px;width:30px;height:1px;background:#3a3a3a;"></div>
<div class="a" style="left:8px;top:648px;width:14px;height:14px;background:#f6f6f6;border:1px solid #333"></div>
<div class="a" style="left:18px;top:656px;width:14px;height:14px;background:#dcdcdc;border:1px solid #333"></div>
<svg class="a" style="left:18px;top:656px;" width="14" height="14" viewBox="0 0 14 14"><rect x="3" y="3" width="8" height="8" fill="#444"/><path d="M2 12 L12 2" stroke="#e8202a" stroke-width="2.5"/></svg>
<svg class="a" style="left:24px;top:646px;" width="8" height="8" viewBox="0 0 8 8"><path d="M1 2 C5 2 6 3 6 7" fill="none" stroke="#ccc" stroke-width="1.2"/><path d="M0 2 L2.5 0 V4Z M6 8 L4 5.5 H8Z" fill="#ccc"/></svg>
<svg class="a" style="left:6px;top:668px;" width="14" height="14" viewBox="0 0 14 14"><rect x="5" y="5" width="8" height="8" fill="#111" stroke="#ddd" stroke-width="1"/><rect x="1" y="1" width="8" height="8" fill="#eee" stroke="#444" stroke-width="1"/><path d="M1 9 L9 1" stroke="#e8202a" stroke-width="1.4"/></svg>
<svg class="a" style="left:7px;top:688px;" width="28" height="14" viewBox="0 0 28 14"><rect x="1" y="1" width="11" height="11" fill="#3e3e3e" stroke="#c4c4c4" stroke-width="1.5"/></svg>
<div class="t" style="left:21.0px;top:687.4px;font-size:16px;color:#8f8f8f;font-family:'Liberation Serif',serif;">T</div>
<div class="a" style="left:4px;top:705px;width:30px;height:1px;background:#3a3a3a;"></div>
<div class="a" style="left:7px;top:710px;width:28px;height:26px;background:#353535;"></div>
<div class="a" style="left:12px;top:714px;width:15px;height:15px;background:#f4f4f4;"></div>
<svg class="a" style="left:28px;top:729px;" width="5" height="5" viewBox="0 0 5 5"><path d="M5 0 L5 5 L0 5Z" fill="#d0d0d0"/></svg>
<div class="a" style="left:4px;top:740px;width:30px;height:1px;background:#3a3a3a;"></div>
<div class="a" style="left:7px;top:744px;width:28px;height:25px;background:#353535;"></div>
<svg class="a" style="left:12px;top:749px;" width="17" height="15" viewBox="0 0 17 15"><rect x="1" y="1" width="15" height="13" fill="#555" stroke="#d0d0d0" stroke-width="1.5"/><rect x="3" y="3" width="11" height="3" fill="#c8c8c8"/><path d="M4 9h4v3h5" stroke="#ddd" stroke-width="1.5" fill="none"/></svg>
<svg class="a" style="left:28px;top:763px;" width="5" height="5" viewBox="0 0 5 5"><path d="M5 0 L5 5 L0 5Z" fill="#d0d0d0"/></svg>
<div class="a" style="left:41px;top:102px;width:1356px;height:22px;background:#343434;"></div>
<div class="a" style="left:42px;top:102px;width:218px;height:22px;background:#4a4a4a;"></div>
<div class="t" style="left:53.0px;top:107.9px;font-size:12.6px;color:#e6e6e6;font-weight:bold;letter-spacing:0.19px;">*Firmenfahnen.indd @ 12 %</div>
<svg class="a" style="left:243px;top:109px;" width="9" height="8" viewBox="0 0 9 8"><path d="M1 1 L8 7 M8 1 L1 7" stroke="#dadada" stroke-width="1.6"/></svg>
<div class="a" style="left:260px;top:102px;width:180px;height:22px;background:#3a3a3a;"></div>
<div class="t" style="left:273.0px;top:107.9px;font-size:12.6px;color:#9a9a9a;font-weight:bold;letter-spacing:-0.07px;">Hissfahne.indd @ 6 %</div>
<svg class="a" style="left:424px;top:109px;" width="9" height="8" viewBox="0 0 9 8"><path d="M1 1 L8 7 M8 1 L1 7" stroke="#dadada" stroke-width="1.6"/></svg>
<div class="a" style="left:41px;top:124px;width:1356px;height:20px;background:#222222;"></div>
<svg class="a" style="left:41px;top:124px;" width="1356" height="20" viewBox="0 0 1356 20"><rect x="22.30" y="17" width="1" height="3" fill="#8a8a8a"/><rect x="26.73" y="17" width="1" height="3" fill="#8a8a8a"/><rect x="31.15" y="17" width="1" height="3" fill="#8a8a8a"/><rect x="35.58" y="17" width="1" height="3" fill="#8a8a8a"/><rect x="40.00" y="0" width="1" height="20" fill="#a8a8a8"/><rect x="44.42" y="17" width="1" height="3" fill="#8a8a8a"/><rect x="48.85" y="17" width="1" height="3" fill="#8a8a8a"/><rect x="53.27" y="17" width="1" height="3" fill="#8a8a8a"/><rect x="57.70" y="17" width="1" height="3" fill="#8a8a8a"/><rect x="62.12" y="13.5" width="1" height="6.5" fill="#a8a8a8"/><rect x="66.54" y="17" width="1" height="3" fill="#8a8a8a"/><rect x="70.97" y="17" width="1" height="3" fill="#8a8a8a"/><rect x="75.39" y="17" width="1" height="3" fill="#8a8a8a"/><rect x="79.82" y="17" width="1" height="3" fill="#8a8a8a"/><rect x="84.24" y="10.5" width="1" height="9.5" fill="#a8a8a8"/><rect x="88.66" y="17" width="1" height="3" fill="#8a8a8a"/><rect x="93.09" y="17" width="1" height="3" fill="#8a8a8a"/><rect x="97.51" y="17" width="1" height="3" fill="#8a8a8a"/><rect x="101.94" y="17" width="1" height="3" fill="#8a8a8a"/><rect x="106.36" y="13.5" width="1" height="6.5" fill="#a8a8a8"/><rect x="110.78" y="17" width="1" height="3" fill="#8a8a8a"/><rect x="115.21" y="17" width="1" height="3" fill="#8a8a8a"/><rect x="119.63" y="17" width="1" height="3" fill="#8a8a8a"/><rect x="124.06" y="17" width="1" height="3" fill="#8a8a8a"/><rect x="128.48" y="10.5" width="1" height="9.5" fill="#a8a8a8"/><rect x="132.90" y="17" width="1" height="3" fill="#8a8a8a"/><rect x="137.33" y="17" width="1" height="3" fill="#8a8a8a"/><rect x="141.75" y="17" width="1" height="3" fill="#8a8a8a"/><rect x="146.18" y="17" width="1" height="3" fill="#8a8a8a"/><rect x="150.60" y="13.5" width="1" height="6.5" fill="#a8a8a8"/><rect x="155.02" y="17" width="1" height="3" fill="#8a8a8a"/><rect x="159.45" y="17" width="1" height="3" fill="#8a8a8a"/><rect x="163.87" y="17" width="1" height="3" fill="#8a8a8a"/><rect x="168.30" y="17" width="1" height="3" fill="#8a8a8a"/><rect x="172.72" y="10.5" width="1" height="9.5" fill="#a8a8a8"/><rect x="177.14" y="17" width="1" height="3" fill="#8a8a8a"/><rect x="181.57" y="17" width="1" height="3" fill="#8a8a8a"/><rect x="185.99" y="17" width="1" height="3" fill="#8a8a8a"/><rect x="190.42" y="17" width="1" height="3" fill="#8a8a8a"/><rect x="194.84" y="13.5" width="1" height="6.5" fill="#a8a8a8"/><rect x="199.26" y="17" width="1" height="3" fill="#8a8a8a"/><rect x="203.69" y="17" width="1" height="3" fill="#8a8a8a"/><rect x="208.11" y="17" width="1" height="3" fill="#8a8a8a"/><rect x="212.54" y="17" width="1" height="3" fill="#8a8a8a"/><rect x="216.96" y="10.5" width="1" height="9.5" fill="#a8a8a8"/><rect x="221.38" y="17" width="1" height="3" fill="#8a8a8a"/><rect x="225.81" y="17" width="1" height="3" fill="#8a8a8a"/><rect x="230.23" y="17" width="1" height="3" fill="#8a8a8a"/><rect x="234.66" y="17" width="1" height="3" fill="#8a8a8a"/><rect x="239.08" y="13.5" width="1" height="6.5" fill="#a8a8a8"/><rect x="243.50" y="17" width="1" height="3" fill="#8a8a8a"/><rect x="247.93" y="17" width="1" height="3" fill="#8a8a8a"/><rect x="252.35" y="17" width="1" height="3" fill="#8a8a8a"/><rect x="256.78" y="17" width="1" height="3" fill="#8a8a8a"/><rect x="261.20" y="0" width="1" height="20" fill="#a8a8a8"/><rect x="265.62" y="17" width="1" height="3" fill="#8a8a8a"/><rect x="270.05" y="17" width="1" height="3" fill="#8a8a8a"/><rect x="274.47" y="17" width="1" height="3" fill="#8a8a8a"/><rect x="278.90" y="17" width="1" height="3" fill="#8a8a8a"/><rect x="283.32" y="13.5" width="1" height="6.5" fill="#a8a8a8"/><rect x="287.74" y="17" width="1" height="3" fill="#8a8a8a"/><rect x="292.17" y="17" width="1" height="3" fill="#8a8a8a"/><rect x="296.59" y="17" width="1" height="3" fill="#8a8a8a"/><rect x="301.02" y="17" width="1" height="3" fill="#8a8a8a"/><rect x="305.44" y="10.5" width="1" height="9.5" fill="#a8a8a8"/><rect x="309.86" y="17" width="1" height="3" fill="#8a8a8a"/><rect x="314.29" y="17" width="1" height="3" fill="#8a8a8a"/><rect x="318.71" y="17" width="1" height="3" fill="#8a8a8a"/><rect x="323.14" y="17" width="1" height="3" fill="#8a8a8a"/><rect x="327.56" y="13.5" width="1" height="6.5" fill="#a8a8a8"/><rect x="331.98" y="17" width="1" height="3" fill="#8a8a8a"/><rect x="336.41" y="17" width="1" height="3" fill="#8a8a8a"/><rect x="340.83" y="17" width="1" height="3" fill="#8a8a8a"/><rect x="345.26" y="17" width="1" height="3" fill="#8a8a8a"/><rect x="349.68" y="10.5" width="1" height="9.5" fill="#a8a8a8"/><rect x="354.10" y="17" width="1" height="3" fill="#8a8a8a"/><rect x="358.53" y="17" width="1" height="3" fill="#8a8a8a"/><rect x="362.95" y="17" width="1" height="3" fill="#8a8a8a"/><rect x="367.38" y="17" width="1" height="3" fill="#8a8a8a"/><rect x="371.80" y="13.5" width="1" height="6.5" fill="#a8a8a8"/><rect x="376.22" y="17" width="1" height="3" fill="#8a8a8a"/><rect x="380.65" y="17" width="1" height="3" fill="#8a8a8a"/><rect x="385.07" y="17" width="1" height="3" fill="#8a8a8a"/><rect x="389.50" y="17" width="1" height="3" fill="#8a8a8a"/><rect x="393.92" y="10.5" width="1" height="9.5" fill="#a8a8a8"/><rect x="398.34" y="17" width="1" height="3" fill="#8a8a8a"/><rect x="402.77" y="17" width="1" height="3" fill="#8a8a8a"/><rect x="407.19" y="17" width="1" height="3" fill="#8a8a8a"/><rect x="411.62" y="17" width="1" height="3" fill="#8a8a8a"/><rect x="416.04" y="13.5" width="1" height="6.5" fill="#a8a8a8"/><rect x="420.46" y="17" width="1" height="3" fill="#8a8a8a"/><rect x="424.89" y="17" width="1" height="3" fill="#8a8a8a"/><rect x="429.31" y="17" width="1" height="3" fill="#8a8a8a"/><rect x="433.74" y="17" width="1" height="3" fill="#8a8a8a"/><rect x="438.16" y="10.5" width="1" height="9.5" fill="#a8a8a8"/><rect x="442.58" y="17" width="1" height="3" fill="#8a8a8a"/><rect x="447.01" y="17" width="1" height="3" fill="#8a8a8a"/><rect x="451.43" y="17" width="1" height="3" fill="#8a8a8a"/><rect x="455.86" y="17" width="1" height="3" fill="#8a8a8a"/><rect x="460.28" y="13.5" width="1" height="6.5" fill="#a8a8a8"/><rect x="464.70" y="17" width="1" height="3" fill="#8a8a8a"/><rect x="469.13" y="17" width="1" height="3" fill="#8a8a8a"/><rect x="473.55" y="17" width="1" height="3" fill="#8a8a8a"/><rect x="477.98" y="17" width="1" height="3" fill="#8a8a8a"/><rect x="482.40" y="0" width="1" height="20" fill="#a8a8a8"/><rect x="486.82" y="17" width="1" height="3" fill="#8a8a8a"/><rect x="491.25" y="17" width="1" height="3" fill="#8a8a8a"/><rect x="495.67" y="17" width="1" height="3" fill="#8a8a8a"/><rect x="500.10" y="17" width="1" height="3" fill="#8a8a8a"/><rect x="504.52" y="13.5" width="1" height="6.5" fill="#a8a8a8"/><rect x="508.94" y="17" width="1" height="3" fill="#8a8a8a"/><rect x="513.37" y="17" width="1" height="3" fill="#8a8a8a"/><rect x="517.79" y="17" width="1" height="3" fill="#8a8a8a"/><rect x="522.22" y="17" width="1" height="3" fill="#8a8a8a"/><rect x="526.64" y="10.5" width="1" height="9.5" fill="#a8a8a8"/><rect x="531.06" y="17" width="1" height="3" fill="#8a8a8a"/><rect x="535.49" y="17" width="1" height="3" fill="#8a8a8a"/><rect x="539.91" y="17" width="1" height="3" fill="#8a8a8a"/><rect x="544.34" y="17" width="1" height="3" fill="#8a8a8a"/><rect x="548.76" y="13.5" width="1" height="6.5" fill="#a8a8a8"/><rect x="553.18" y="17" width="1" height="3" fill="#8a8a8a"/><rect x="557.61" y="17" width="1" height="3" fill="#8a8a8a"/><rect x="562.03" y="17" width="1" height="3" fill="#8a8a8a"/><rect x="566.46" y="17" width="1" height="3" fill="#8a8a8a"/><rect x="570.88" y="10.5" width="1" height="9.5" fill="#a8a8a8"/><rect x="575.30" y="17" width="1" height="3" fill="#8a8a8a"/><rect x="579.73" y="17" width="1" height="3" fill="#8a8a8a"/><rect x="584.15" y="17" width="1" height="3" fill="#8a8a8a"/><rect x="588.58" y="17" width="1" height="3" fill="#8a8a8a"/><rect x="593.00" y="13.5" width="1" height="6.5" fill="#a8a8a8"/><rect x="597.42" y="17" width="1" height="3" fill="#8a8a8a"/><rect x="601.85" y="17" width="1" height="3" fill="#8a8a8a"/><rect x="606.27" y="17" width="1" height="3" fill="#8a8a8a"/><rect x="610.70" y="17" width="1" height="3" fill="#8a8a8a"/><rect x="615.12" y="10.5" width="1" height="9.5" fill="#a8a8a8"/><rect x="619.54" y="17" width="1" height="3" fill="#8a8a8a"/><rect x="623.97" y="17" width="1" height="3" fill="#8a8a8a"/><rect x="628.39" y="17" width="1" height="3" fill="#8a8a8a"/><rect x="632.82" y="17" width="1" height="3" fill="#8a8a8a"/><rect x="637.24" y="13.5" width="1" height="6.5" fill="#a8a8a8"/><rect x="641.66" y="17" width="1" height="3" fill="#8a8a8a"/><rect x="646.09" y="17" width="1" height="3" fill="#8a8a8a"/><rect x="650.51" y="17" width="1" height="3" fill="#8a8a8a"/><rect x="654.94" y="17" width="1" height="3" fill="#8a8a8a"/><rect x="659.36" y="10.5" width="1" height="9.5" fill="#a8a8a8"/><rect x="663.78" y="17" width="1" height="3" fill="#8a8a8a"/><rect x="668.21" y="17" width="1" height="3" fill="#8a8a8a"/><rect x="672.63" y="17" width="1" height="3" fill="#8a8a8a"/><rect x="677.06" y="17" width="1" height="3" fill="#8a8a8a"/><rect x="681.48" y="13.5" width="1" height="6.5" fill="#a8a8a8"/><rect x="685.90" y="17" width="1" height="3" fill="#8a8a8a"/><rect x="690.33" y="17" width="1" height="3" fill="#8a8a8a"/><rect x="694.75" y="17" width="1" height="3" fill="#8a8a8a"/><rect x="699.18" y="17" width="1" height="3" fill="#8a8a8a"/><rect x="703.60" y="0" width="1" height="20" fill="#a8a8a8"/><rect x="708.02" y="17" width="1" height="3" fill="#8a8a8a"/><rect x="712.45" y="17" width="1" height="3" fill="#8a8a8a"/><rect x="716.87" y="17" width="1" height="3" fill="#8a8a8a"/><rect x="721.30" y="17" width="1" height="3" fill="#8a8a8a"/><rect x="725.72" y="13.5" width="1" height="6.5" fill="#a8a8a8"/><rect x="730.14" y="17" width="1" height="3" fill="#8a8a8a"/><rect x="734.57" y="17" width="1" height="3" fill="#8a8a8a"/><rect x="738.99" y="17" width="1" height="3" fill="#8a8a8a"/><rect x="743.42" y="17" width="1" height="3" fill="#8a8a8a"/><rect x="747.84" y="10.5" width="1" height="9.5" fill="#a8a8a8"/><rect x="752.26" y="17" width="1" height="3" fill="#8a8a8a"/><rect x="756.69" y="17" width="1" height="3" fill="#8a8a8a"/><rect x="761.11" y="17" width="1" height="3" fill="#8a8a8a"/><rect x="765.54" y="17" width="1" height="3" fill="#8a8a8a"/><rect x="769.96" y="13.5" width="1" height="6.5" fill="#a8a8a8"/><rect x="774.38" y="17" width="1" height="3" fill="#8a8a8a"/><rect x="778.81" y="17" width="1" height="3" fill="#8a8a8a"/><rect x="783.23" y="17" width="1" height="3" fill="#8a8a8a"/><rect x="787.66" y="17" width="1" height="3" fill="#8a8a8a"/><rect x="792.08" y="10.5" width="1" height="9.5" fill="#a8a8a8"/><rect x="796.50" y="17" width="1" height="3" fill="#8a8a8a"/><rect x="800.93" y="17" width="1" height="3" fill="#8a8a8a"/><rect x="805.35" y="17" width="1" height="3" fill="#8a8a8a"/><rect x="809.78" y="17" width="1" height="3" fill="#8a8a8a"/><rect x="814.20" y="13.5" width="1" height="6.5" fill="#a8a8a8"/><rect x="818.62" y="17" width="1" height="3" fill="#8a8a8a"/><rect x="823.05" y="17" width="1" height="3" fill="#8a8a8a"/><rect x="827.47" y="17" width="1" height="3" fill="#8a8a8a"/><rect x="831.90" y="17" width="1" height="3" fill="#8a8a8a"/><rect x="836.32" y="10.5" width="1" height="9.5" fill="#a8a8a8"/><rect x="840.74" y="17" width="1" height="3" fill="#8a8a8a"/><rect x="845.17" y="17" width="1" height="3" fill="#8a8a8a"/><rect x="849.59" y="17" width="1" height="3" fill="#8a8a8a"/><rect x="854.02" y="17" width="1" height="3" fill="#8a8a8a"/><rect x="858.44" y="13.5" width="1" height="6.5" fill="#a8a8a8"/><rect x="862.86" y="17" width="1" height="3" fill="#8a8a8a"/><rect x="867.29" y="17" width="1" height="3" fill="#8a8a8a"/><rect x="871.71" y="17" width="1" height="3" fill="#8a8a8a"/><rect x="876.14" y="17" width="1" height="3" fill="#8a8a8a"/><rect x="880.56" y="10.5" width="1" height="9.5" fill="#a8a8a8"/><rect x="884.98" y="17" width="1" height="3" fill="#8a8a8a"/><rect x="889.41" y="17" width="1" height="3" fill="#8a8a8a"/><rect x="893.83" y="17" width="1" height="3" fill="#8a8a8a"/><rect x="898.26" y="17" width="1" height="3" fill="#8a8a8a"/><rect x="902.68" y="13.5" width="1" height="6.5" fill="#a8a8a8"/><rect x="907.10" y="17" width="1" height="3" fill="#8a8a8a"/><rect x="911.53" y="17" width="1" height="3" fill="#8a8a8a"/><rect x="915.95" y="17" width="1" height="3" fill="#8a8a8a"/><rect x="920.38" y="17" width="1" height="3" fill="#8a8a8a"/><rect x="924.80" y="0" width="1" height="20" fill="#a8a8a8"/><rect x="929.22" y="17" width="1" height="3" fill="#8a8a8a"/><rect x="933.65" y="17" width="1" height="3" fill="#8a8a8a"/><rect x="938.07" y="17" width="1" height="3" fill="#8a8a8a"/><rect x="942.50" y="17" width="1" height="3" fill="#8a8a8a"/><rect x="946.92" y="13.5" width="1" height="6.5" fill="#a8a8a8"/><rect x="951.34" y="17" width="1" height="3" fill="#8a8a8a"/><rect x="955.77" y="17" width="1" height="3" fill="#8a8a8a"/><rect x="960.19" y="17" width="1" height="3" fill="#8a8a8a"/><rect x="964.62" y="17" width="1" height="3" fill="#8a8a8a"/><rect x="969.04" y="10.5" width="1" height="9.5" fill="#a8a8a8"/><rect x="973.46" y="17" width="1" height="3" fill="#8a8a8a"/><rect x="977.89" y="17" width="1" height="3" fill="#8a8a8a"/><rect x="982.31" y="17" width="1" height="3" fill="#8a8a8a"/><rect x="986.74" y="17" width="1" height="3" fill="#8a8a8a"/><rect x="991.16" y="13.5" width="1" height="6.5" fill="#a8a8a8"/><rect x="995.58" y="17" width="1" height="3" fill="#8a8a8a"/><rect x="1000.01" y="17" width="1" height="3" fill="#8a8a8a"/><rect x="1004.43" y="17" width="1" height="3" fill="#8a8a8a"/><rect x="1008.86" y="17" width="1" height="3" fill="#8a8a8a"/><rect x="1013.28" y="10.5" width="1" height="9.5" fill="#a8a8a8"/><rect x="1017.70" y="17" width="1" height="3" fill="#8a8a8a"/><rect x="1022.13" y="17" width="1" height="3" fill="#8a8a8a"/><rect x="1026.55" y="17" width="1" height="3" fill="#8a8a8a"/><rect x="1030.98" y="17" width="1" height="3" fill="#8a8a8a"/><rect x="1035.40" y="13.5" width="1" height="6.5" fill="#a8a8a8"/><rect x="1039.82" y="17" width="1" height="3" fill="#8a8a8a"/><rect x="1044.25" y="17" width="1" height="3" fill="#8a8a8a"/><rect x="1048.67" y="17" width="1" height="3" fill="#8a8a8a"/><rect x="1053.10" y="17" width="1" height="3" fill="#8a8a8a"/><rect x="1057.52" y="10.5" width="1" height="9.5" fill="#a8a8a8"/><rect x="1061.94" y="17" width="1" height="3" fill="#8a8a8a"/><rect x="1066.37" y="17" width="1" height="3" fill="#8a8a8a"/><rect x="1070.79" y="17" width="1" height="3" fill="#8a8a8a"/><rect x="1075.22" y="17" width="1" height="3" fill="#8a8a8a"/><rect x="1079.64" y="13.5" width="1" height="6.5" fill="#a8a8a8"/><rect x="1084.06" y="17" width="1" height="3" fill="#8a8a8a"/><rect x="1088.49" y="17" width="1" height="3" fill="#8a8a8a"/><rect x="1092.91" y="17" width="1" height="3" fill="#8a8a8a"/><rect x="1097.34" y="17" width="1" height="3" fill="#8a8a8a"/><rect x="1101.76" y="10.5" width="1" height="9.5" fill="#a8a8a8"/><rect x="1106.18" y="17" width="1" height="3" fill="#8a8a8a"/><rect x="1110.61" y="17" width="1" height="3" fill="#8a8a8a"/><rect x="1115.03" y="17" width="1" height="3" fill="#8a8a8a"/><rect x="1119.46" y="17" width="1" height="3" fill="#8a8a8a"/><rect x="1123.88" y="13.5" width="1" height="6.5" fill="#a8a8a8"/><rect x="1128.30" y="17" width="1" height="3" fill="#8a8a8a"/><rect x="1132.73" y="17" width="1" height="3" fill="#8a8a8a"/><rect x="1137.15" y="17" width="1" height="3" fill="#8a8a8a"/><rect x="1141.58" y="17" width="1" height="3" fill="#8a8a8a"/><rect x="1146.00" y="0" width="1" height="20" fill="#a8a8a8"/><rect x="1150.42" y="17" width="1" height="3" fill="#8a8a8a"/><rect x="1154.85" y="17" width="1" height="3" fill="#8a8a8a"/><rect x="1159.27" y="17" width="1" height="3" fill="#8a8a8a"/><rect x="1163.70" y="17" width="1" height="3" fill="#8a8a8a"/><rect x="1168.12" y="13.5" width="1" height="6.5" fill="#a8a8a8"/><rect x="1172.54" y="17" width="1" height="3" fill="#8a8a8a"/><rect x="1176.97" y="17" width="1" height="3" fill="#8a8a8a"/><rect x="1181.39" y="17" width="1" height="3" fill="#8a8a8a"/><rect x="1185.82" y="17" width="1" height="3" fill="#8a8a8a"/><rect x="1190.24" y="10.5" width="1" height="9.5" fill="#a8a8a8"/><rect x="1194.66" y="17" width="1" height="3" fill="#8a8a8a"/><rect x="1199.09" y="17" width="1" height="3" fill="#8a8a8a"/><rect x="1203.51" y="17" width="1" height="3" fill="#8a8a8a"/><rect x="1207.94" y="17" width="1" height="3" fill="#8a8a8a"/><rect x="1212.36" y="13.5" width="1" height="6.5" fill="#a8a8a8"/><rect x="1216.78" y="17" width="1" height="3" fill="#8a8a8a"/><rect x="1221.21" y="17" width="1" height="3" fill="#8a8a8a"/><rect x="1225.63" y="17" width="1" height="3" fill="#8a8a8a"/><rect x="1230.06" y="17" width="1" height="3" fill="#8a8a8a"/><rect x="1234.48" y="10.5" width="1" height="9.5" fill="#a8a8a8"/><rect x="1238.90" y="17" width="1" height="3" fill="#8a8a8a"/><rect x="1243.33" y="17" width="1" height="3" fill="#8a8a8a"/><rect x="1247.75" y="17" width="1" height="3" fill="#8a8a8a"/><rect x="1252.18" y="17" width="1" height="3" fill="#8a8a8a"/><rect x="1256.60" y="13.5" width="1" height="6.5" fill="#a8a8a8"/><rect x="1261.02" y="17" width="1" height="3" fill="#8a8a8a"/><rect x="1265.45" y="17" width="1" height="3" fill="#8a8a8a"/><rect x="1269.87" y="17" width="1" height="3" fill="#8a8a8a"/><rect x="1274.30" y="17" width="1" height="3" fill="#8a8a8a"/><rect x="1278.72" y="10.5" width="1" height="9.5" fill="#a8a8a8"/><rect x="1283.14" y="17" width="1" height="3" fill="#8a8a8a"/><rect x="1287.57" y="17" width="1" height="3" fill="#8a8a8a"/><rect x="1291.99" y="17" width="1" height="3" fill="#8a8a8a"/><rect x="1296.42" y="17" width="1" height="3" fill="#8a8a8a"/><rect x="1300.84" y="13.5" width="1" height="6.5" fill="#a8a8a8"/><rect x="1305.26" y="17" width="1" height="3" fill="#8a8a8a"/><rect x="1309.69" y="17" width="1" height="3" fill="#8a8a8a"/><rect x="1314.11" y="17" width="1" height="3" fill="#8a8a8a"/><rect x="1318.54" y="17" width="1" height="3" fill="#8a8a8a"/><rect x="1322.96" y="10.5" width="1" height="9.5" fill="#a8a8a8"/><rect x="1327.38" y="17" width="1" height="3" fill="#8a8a8a"/><rect x="1331.81" y="17" width="1" height="3" fill="#8a8a8a"/><rect x="1336.23" y="17" width="1" height="3" fill="#8a8a8a"/><rect x="1340.66" y="17" width="1" height="3" fill="#8a8a8a"/><rect x="1345.08" y="13.5" width="1" height="6.5" fill="#a8a8a8"/><rect x="1349.50" y="17" width="1" height="3" fill="#8a8a8a"/><rect x="1353.93" y="17" width="1" height="3" fill="#8a8a8a"/><rect x="19" y="0" width="1" height="20" fill="#a8a8a8"/><rect x="19" y="19" width="1337" height="1" fill="#6a6a6a"/></svg>
<div class="t" style="left:83.5px;top:125.9px;font-size:11.3px;color:#c8c8c8;letter-spacing:-0.78px;">3500</div>
<div class="t" style="left:304.7px;top:125.9px;font-size:11.3px;color:#c8c8c8;letter-spacing:-0.78px;">3000</div>
<div class="t" style="left:525.9px;top:125.9px;font-size:11.3px;color:#c8c8c8;letter-spacing:-0.78px;">2500</div>
<div class="t" style="left:747.1px;top:125.9px;font-size:11.3px;color:#c8c8c8;letter-spacing:-0.78px;">2000</div>
<div class="t" style="left:968.3px;top:125.9px;font-size:11.3px;color:#c8c8c8;letter-spacing:-0.78px;">1500</div>
<div class="t" style="left:1189.5px;top:125.9px;font-size:11.3px;color:#c8c8c8;letter-spacing:-0.78px;">1000</div>
<svg class="a" style="left:41px;top:124px;" width="19" height="20" viewBox="0 0 19 20"><path d="M3 7 H17" stroke="#777" stroke-dasharray="1 1.5"/><path d="M8 1 V18" stroke="#555" stroke-dasharray="1 1.5"/></svg>
<div class="a" style="left:41px;top:144px;width:20px;height:870px;background:#222222;"></div>
<svg class="a" style="left:41px;top:144px;" width="20" height="870" viewBox="0 0 20 870"><rect x="17" y="1.25" width="3" height="1" fill="#8a8a8a"/><rect x="17" y="5.67" width="3" height="1" fill="#8a8a8a"/><rect x="17" y="10.10" width="3" height="1" fill="#8a8a8a"/><rect x="10.5" y="14.52" width="9.5" height="1" fill="#a8a8a8"/><rect x="17" y="18.94" width="3" height="1" fill="#8a8a8a"/><rect x="17" y="23.37" width="3" height="1" fill="#8a8a8a"/><rect x="17" y="27.79" width="3" height="1" fill="#8a8a8a"/><rect x="17" y="32.22" width="3" height="1" fill="#8a8a8a"/><rect x="13.5" y="36.64" width="6.5" height="1" fill="#a8a8a8"/><rect x="17" y="41.06" width="3" height="1" fill="#8a8a8a"/><rect x="17" y="45.49" width="3" height="1" fill="#8a8a8a"/><rect x="17" y="49.91" width="3" height="1" fill="#8a8a8a"/><rect x="17" y="54.34" width="3" height="1" fill="#8a8a8a"/><rect x="10.5" y="58.76" width="9.5" height="1" fill="#a8a8a8"/><rect x="17" y="63.18" width="3" height="1" fill="#8a8a8a"/><rect x="17" y="67.61" width="3" height="1" fill="#8a8a8a"/><rect x="17" y="72.03" width="3" height="1" fill="#8a8a8a"/><rect x="17" y="76.46" width="3" height="1" fill="#8a8a8a"/><rect x="13.5" y="80.88" width="6.5" height="1" fill="#a8a8a8"/><rect x="17" y="85.30" width="3" height="1" fill="#8a8a8a"/><rect x="17" y="89.73" width="3" height="1" fill="#8a8a8a"/><rect x="17" y="94.15" width="3" height="1" fill="#8a8a8a"/><rect x="17" y="98.58" width="3" height="1" fill="#8a8a8a"/><rect x="0.5" y="103.00" width="19.5" height="1" fill="#a8a8a8"/><rect x="17" y="107.42" width="3" height="1" fill="#8a8a8a"/><rect x="17" y="111.85" width="3" height="1" fill="#8a8a8a"/><rect x="17" y="116.27" width="3" height="1" fill="#8a8a8a"/><rect x="17" y="120.70" width="3" height="1" fill="#8a8a8a"/><rect x="13.5" y="125.12" width="6.5" height="1" fill="#a8a8a8"/><rect x="17" y="129.54" width="3" height="1" fill="#8a8a8a"/><rect x="17" y="133.97" width="3" height="1" fill="#8a8a8a"/><rect x="17" y="138.39" width="3" height="1" fill="#8a8a8a"/><rect x="17" y="142.82" width="3" height="1" fill="#8a8a8a"/><rect x="10.5" y="147.24" width="9.5" height="1" fill="#a8a8a8"/><rect x="17" y="151.66" width="3" height="1" fill="#8a8a8a"/><rect x="17" y="156.09" width="3" height="1" fill="#8a8a8a"/><rect x="17" y="160.51" width="3" height="1" fill="#8a8a8a"/><rect x="17" y="164.94" width="3" height="1" fill="#8a8a8a"/><rect x="13.5" y="169.36" width="6.5" height="1" fill="#a8a8a8"/><rect x="17" y="173.78" width="3" height="1" fill="#8a8a8a"/><rect x="17" y="178.21" width="3" height="1" fill="#8a8a8a"/><rect x="17" y="182.63" width="3" height="1" fill="#8a8a8a"/><rect x="17" y="187.06" width="3" height="1" fill="#8a8a8a"/><rect x="10.5" y="191.48" width="9.5" height="1" fill="#a8a8a8"/><rect x="17" y="195.90" width="3" height="1" fill="#8a8a8a"/><rect x="17" y="200.33" width="3" height="1" fill="#8a8a8a"/><rect x="17" y="204.75" width="3" height="1" fill="#8a8a8a"/><rect x="17" y="209.18" width="3" height="1" fill="#8a8a8a"/><rect x="13.5" y="213.60" width="6.5" height="1" fill="#a8a8a8"/><rect x="17" y="218.02" width="3" height="1" fill="#8a8a8a"/><rect x="17" y="222.45" width="3" height="1" fill="#8a8a8a"/><rect x="17" y="226.87" width="3" height="1" fill="#8a8a8a"/><rect x="17" y="231.30" width="3" height="1" fill="#8a8a8a"/><rect x="10.5" y="235.72" width="9.5" height="1" fill="#a8a8a8"/><rect x="17" y="240.14" width="3" height="1" fill="#8a8a8a"/><rect x="17" y="244.57" width="3" height="1" fill="#8a8a8a"/><rect x="17" y="248.99" width="3" height="1" fill="#8a8a8a"/><rect x="17" y="253.42" width="3" height="1" fill="#8a8a8a"/><rect x="13.5" y="257.84" width="6.5" height="1" fill="#a8a8a8"/><rect x="17" y="262.26" width="3" height="1" fill="#8a8a8a"/><rect x="17" y="266.69" width="3" height="1" fill="#8a8a8a"/><rect x="17" y="271.11" width="3" height="1" fill="#8a8a8a"/><rect x="17" y="275.54" width="3" height="1" fill="#8a8a8a"/><rect x="10.5" y="279.96" width="9.5" height="1" fill="#a8a8a8"/><rect x="17" y="284.38" width="3" height="1" fill="#8a8a8a"/><rect x="17" y="288.81" width="3" height="1" fill="#8a8a8a"/><rect x="17" y="293.23" width="3" height="1" fill="#8a8a8a"/><rect x="17" y="297.66" width="3" height="1" fill="#8a8a8a"/><rect x="13.5" y="302.08" width="6.5" height="1" fill="#a8a8a8"/><rect x="17" y="306.50" width="3" height="1" fill="#8a8a8a"/><rect x="17" y="310.93" width="3" height="1" fill="#8a8a8a"/><rect x="17" y="315.35" width="3" height="1" fill="#8a8a8a"/><rect x="17" y="319.78" width="3" height="1" fill="#8a8a8a"/><rect x="0.5" y="324.20" width="19.5" height="1" fill="#a8a8a8"/><rect x="17" y="328.62" width="3" height="1" fill="#8a8a8a"/><rect x="17" y="333.05" width="3" height="1" fill="#8a8a8a"/><rect x="17" y="337.47" width="3" height="1" fill="#8a8a8a"/><rect x="17" y="341.90" width="3" height="1" fill="#8a8a8a"/><rect x="13.5" y="346.32" width="6.5" height="1" fill="#a8a8a8"/><rect x="17" y="350.74" width="3" height="1" fill="#8a8a8a"/><rect x="17" y="355.17" width="3" height="1" fill="#8a8a8a"/><rect x="17" y="359.59" width="3" height="1" fill="#8a8a8a"/><rect x="17" y="364.02" width="3" height="1" fill="#8a8a8a"/><rect x="10.5" y="368.44" width="9.5" height="1" fill="#a8a8a8"/><rect x="17" y="372.86" width="3" height="1" fill="#8a8a8a"/><rect x="17" y="377.29" width="3" height="1" fill="#8a8a8a"/><rect x="17" y="381.71" width="3" height="1" fill="#8a8a8a"/><rect x="17" y="386.14" width="3" height="1" fill="#8a8a8a"/><rect x="13.5" y="390.56" width="6.5" height="1" fill="#a8a8a8"/><rect x="17" y="394.98" width="3" height="1" fill="#8a8a8a"/><rect x="17" y="399.41" width="3" height="1" fill="#8a8a8a"/><rect x="17" y="403.83" width="3" height="1" fill="#8a8a8a"/><rect x="17" y="408.26" width="3" height="1" fill="#8a8a8a"/><rect x="10.5" y="412.68" width="9.5" height="1" fill="#a8a8a8"/><rect x="17" y="417.10" width="3" height="1" fill="#8a8a8a"/><rect x="17" y="421.53" width="3" height="1" fill="#8a8a8a"/><rect x="17" y="425.95" width="3" height="1" fill="#8a8a8a"/><rect x="17" y="430.38" width="3" height="1" fill="#8a8a8a"/><rect x="13.5" y="434.80" width="6.5" height="1" fill="#a8a8a8"/><rect x="17" y="439.22" width="3" height="1" fill="#8a8a8a"/><rect x="17" y="443.65" width="3" height="1" fill="#8a8a8a"/><rect x="17" y="448.07" width="3" height="1" fill="#8a8a8a"/><rect x="17" y="452.50" width="3" height="1" fill="#8a8a8a"/><rect x="10.5" y="456.92" width="9.5" height="1" fill="#a8a8a8"/><rect x="17" y="461.34" width="3" height="1" fill="#8a8a8a"/><rect x="17" y="465.77" width="3" height="1" fill="#8a8a8a"/><rect x="17" y="470.19" width="3" height="1" fill="#8a8a8a"/><rect x="17" y="474.62" width="3" height="1" fill="#8a8a8a"/><rect x="13.5" y="479.04" width="6.5" height="1" fill="#a8a8a8"/><rect x="17" y="483.46" width="3" height="1" fill="#8a8a8a"/><rect x="17" y="487.89" width="3" height="1" fill="#8a8a8a"/><rect x="17" y="492.31" width="3" height="1" fill="#8a8a8a"/><rect x="17" y="496.74" width="3" height="1" fill="#8a8a8a"/><rect x="10.5" y="501.16" width="9.5" height="1" fill="#a8a8a8"/><rect x="17" y="505.58" width="3" height="1" fill="#8a8a8a"/><rect x="17" y="510.01" width="3" height="1" fill="#8a8a8a"/><rect x="17" y="514.43" width="3" height="1" fill="#8a8a8a"/><rect x="17" y="518.86" width="3" height="1" fill="#8a8a8a"/><rect x="13.5" y="523.28" width="6.5" height="1" fill="#a8a8a8"/><rect x="17" y="527.70" width="3" height="1" fill="#8a8a8a"/><rect x="17" y="532.13" width="3" height="1" fill="#8a8a8a"/><rect x="17" y="536.55" width="3" height="1" fill="#8a8a8a"/><rect x="17" y="540.98" width="3" height="1" fill="#8a8a8a"/><rect x="0.5" y="545.40" width="19.5" height="1" fill="#a8a8a8"/><rect x="17" y="549.82" width="3" height="1" fill="#8a8a8a"/><rect x="17" y="554.25" width="3" height="1" fill="#8a8a8a"/><rect x="17" y="558.67" width="3" height="1" fill="#8a8a8a"/><rect x="17" y="563.10" width="3" height="1" fill="#8a8a8a"/><rect x="13.5" y="567.52" width="6.5" height="1" fill="#a8a8a8"/><rect x="17" y="571.94" width="3" height="1" fill="#8a8a8a"/><rect x="17" y="576.37" width="3" height="1" fill="#8a8a8a"/><rect x="17" y="580.79" width="3" height="1" fill="#8a8a8a"/><rect x="17" y="585.22" width="3" height="1" fill="#8a8a8a"/><rect x="10.5" y="589.64" width="9.5" height="1" fill="#a8a8a8"/><rect x="17" y="594.06" width="3" height="1" fill="#8a8a8a"/><rect x="17" y="598.49" width="3" height="1" fill="#8a8a8a"/><rect x="17" y="602.91" width="3" height="1" fill="#8a8a8a"/><rect x="17" y="607.34" width="3" height="1" fill="#8a8a8a"/><rect x="13.5" y="611.76" width="6.5" height="1" fill="#a8a8a8"/><rect x="17" y="616.18" width="3" height="1" fill="#8a8a8a"/><rect x="17" y="620.61" width="3" height="1" fill="#8a8a8a"/><rect x="17" y="625.03" width="3" height="1" fill="#8a8a8a"/><rect x="17" y="629.46" width="3" height="1" fill="#8a8a8a"/><rect x="10.5" y="633.88" width="9.5" height="1" fill="#a8a8a8"/><rect x="17" y="638.30" width="3" height="1" fill="#8a8a8a"/><rect x="17" y="642.73" width="3" height="1" fill="#8a8a8a"/><rect x="17" y="647.15" width="3" height="1" fill="#8a8a8a"/><rect x="17" y="651.58" width="3" height="1" fill="#8a8a8a"/><rect x="13.5" y="656.00" width="6.5" height="1" fill="#a8a8a8"/><rect x="17" y="660.42" width="3" height="1" fill="#8a8a8a"/><rect x="17" y="664.85" width="3" height="1" fill="#8a8a8a"/><rect x="17" y="669.27" width="3" height="1" fill="#8a8a8a"/><rect x="17" y="673.70" width="3" height="1" fill="#8a8a8a"/><rect x="10.5" y="678.12" width="9.5" height="1" fill="#a8a8a8"/><rect x="17" y="682.54" width="3" height="1" fill="#8a8a8a"/><rect x="17" y="686.97" width="3" height="1" fill="#8a8a8a"/><rect x="17" y="691.39" width="3" height="1" fill="#8a8a8a"/><rect x="17" y="695.82" width="3" height="1" fill="#8a8a8a"/><rect x="13.5" y="700.24" width="6.5" height="1" fill="#a8a8a8"/><rect x="17" y="704.66" width="3" height="1" fill="#8a8a8a"/><rect x="17" y="709.09" width="3" height="1" fill="#8a8a8a"/><rect x="17" y="713.51" width="3" height="1" fill="#8a8a8a"/><rect x="17" y="717.94" width="3" height="1" fill="#8a8a8a"/><rect x="10.5" y="722.36" width="9.5" height="1" fill="#a8a8a8"/><rect x="17" y="726.78" width="3" height="1" fill="#8a8a8a"/><rect x="17" y="731.21" width="3" height="1" fill="#8a8a8a"/><rect x="17" y="735.63" width="3" height="1" fill="#8a8a8a"/><rect x="17" y="740.06" width="3" height="1" fill="#8a8a8a"/><rect x="13.5" y="744.48" width="6.5" height="1" fill="#a8a8a8"/><rect x="17" y="748.90" width="3" height="1" fill="#8a8a8a"/><rect x="17" y="753.33" width="3" height="1" fill="#8a8a8a"/><rect x="17" y="757.75" width="3" height="1" fill="#8a8a8a"/><rect x="17" y="762.18" width="3" height="1" fill="#8a8a8a"/><rect x="0.5" y="766.60" width="19.5" height="1" fill="#a8a8a8"/><rect x="17" y="771.02" width="3" height="1" fill="#8a8a8a"/><rect x="17" y="775.45" width="3" height="1" fill="#8a8a8a"/><rect x="17" y="779.87" width="3" height="1" fill="#8a8a8a"/><rect x="17" y="784.30" width="3" height="1" fill="#8a8a8a"/><rect x="13.5" y="788.72" width="6.5" height="1" fill="#a8a8a8"/><rect x="17" y="793.14" width="3" height="1" fill="#8a8a8a"/><rect x="17" y="797.57" width="3" height="1" fill="#8a8a8a"/><rect x="17" y="801.99" width="3" height="1" fill="#8a8a8a"/><rect x="17" y="806.42" width="3" height="1" fill="#8a8a8a"/><rect x="10.5" y="810.84" width="9.5" height="1" fill="#a8a8a8"/><rect x="17" y="815.26" width="3" height="1" fill="#8a8a8a"/><rect x="17" y="819.69" width="3" height="1" fill="#8a8a8a"/><rect x="17" y="824.11" width="3" height="1" fill="#8a8a8a"/><rect x="17" y="828.54" width="3" height="1" fill="#8a8a8a"/><rect x="13.5" y="832.96" width="6.5" height="1" fill="#a8a8a8"/><rect x="17" y="837.38" width="3" height="1" fill="#8a8a8a"/><rect x="17" y="841.81" width="3" height="1" fill="#8a8a8a"/><rect x="17" y="846.23" width="3" height="1" fill="#8a8a8a"/><rect x="17" y="850.66" width="3" height="1" fill="#8a8a8a"/><rect x="10.5" y="855.08" width="9.5" height="1" fill="#a8a8a8"/><rect x="17" y="859.50" width="3" height="1" fill="#8a8a8a"/><rect x="17" y="863.93" width="3" height="1" fill="#8a8a8a"/><rect x="17" y="868.35" width="3" height="1" fill="#8a8a8a"/><rect x="19" y="0" width="1" height="870" fill="#8a8a8a"/></svg>
<div class="t" style="left:44.8px;top:250.2px;font-size:10.4px;color:#c8c8c8;">0</div>
<div class="t" style="left:44.8px;top:471.4px;font-size:10.4px;color:#c8c8c8;">5</div>
<div class="t" style="left:44.8px;top:480.3px;font-size:10.4px;color:#c8c8c8;">0</div>
<div class="t" style="left:44.8px;top:489.2px;font-size:10.4px;color:#c8c8c8;">0</div>
<div class="t" style="left:44.8px;top:692.6px;font-size:10.4px;color:#c8c8c8;">1</div>
<div class="t" style="left:44.8px;top:701.5px;font-size:10.4px;color:#c8c8c8;">0</div>
<div class="t" style="left:44.8px;top:710.4px;font-size:10.4px;color:#c8c8c8;">0</div>
<div class="t" style="left:44.8px;top:719.3px;font-size:10.4px;color:#c8c8c8;">0</div>
<div class="t" style="left:44.8px;top:913.8px;font-size:10.4px;color:#c8c8c8;">1</div>
<div class="t" style="left:44.8px;top:922.7px;font-size:10.4px;color:#c8c8c8;">5</div>
<div class="t" style="left:44.8px;top:931.6px;font-size:10.4px;color:#c8c8c8;">0</div>
<div class="t" style="left:44.8px;top:940.5px;font-size:10.4px;color:#c8c8c8;">0</div>
<div class="a" style="left:61px;top:144px;width:7px;height:870px;background:#3f3f3f;"></div>
<div class="a" style="left:68px;top:144px;width:1px;height:870px;background:#151515;"></div>
<div class="a" style="left:69px;top:144px;width:1328px;height:870px;background:#616161;"></div>
<div class="a" style="left:80px;top:246px;width:1317px;height:667px;background:#ffffff;"></div>
<div class="a" style="left:1389px;top:246px;width:8px;height:667px;background:linear-gradient(90deg,#ffffff,#f0f0f0);"></div>
<div class="a" style="left:80px;top:246px;width:1317px;height:1px;background:#8a5064;"></div>
<div class="a" style="left:80px;top:247px;width:1317px;height:1px;background:#5a1e34;"></div>
<div class="a" style="left:80px;top:246px;width:1px;height:667px;background:#8a5064;"></div>
<div class="a" style="left:81px;top:247px;width:1px;height:665px;background:#5a1e34;"></div>
<div class="a" style="left:80px;top:911px;width:1317px;height:1px;background:#5a1e34;"></div>
<div class="a" style="left:80px;top:912px;width:1317px;height:1px;background:#7a4858;"></div>
<div class="a" style="left:82px;top:248px;width:1315px;height:2px;background:#b58ad6;"></div>
<div class="a" style="left:82px;top:909px;width:1315px;height:2px;background:#b58ad6;"></div>
<div class="a" style="left:89.5px;top:250px;width:1.5px;height:659px;background:#e47cf0;"></div>
<div class="a" style="left:214px;top:402px;width:177px;height:177px;background:#277a95;"></div>
<div class="a" style="left:391px;top:402px;width:177px;height:177px;background:#65b845;"></div>
<div class="a" style="left:214px;top:579px;width:177px;height:177px;background:#d98e1b;"></div>
<div class="a" style="left:391px;top:579px;width:177px;height:177px;background:#d92a2b;"></div>
<div class="a" style="left:213.5px;top:401.5px;width:355px;height:355px;background:transparent;border:1px solid #6ed04c"></div>
<div class="a" style="left:391px;top:402px;width:1px;height:354px;background:#6ed04c;"></div>
<div class="a" style="left:214px;top:579px;width:354px;height:1px;background:#6ed04c;"></div>
<svg class="a" style="left:0px;top:0px;" width="600" height="760" viewBox="0 0 600 760"><path d="M280 432 L284.5 432 L284.5 511 L293.2 511 L293.2 432 L301 432 L301 511 L307.5 511 L307.5 432 L315.6 432 L315.6 511 L323.8 511 L323.8 432 L330 432 C333 460 337.5 490 337.8 512 C338 530 318 540 314 556 C313 565 317 590 317.5 620 L317.5 713 C317.5 730 292 730 292 713 L292 620 C292.5 590 296 565 295 556 C291 540 271.5 530 271.8 512 C272 490 277 460 280 432Z" fill="#ffffff"/><path d="M496 432 C499 431 498.4 436 498.4 440 L498.4 713 C498.4 731 472.6 731 472.6 713 L472.6 634 C477 628 478 612 470 600 C466 594 460 592 460 591 C460 540 463 500 472 468 C480 445 490 434 496 432Z" fill="#ffffff"/></svg>
<svg class="a" style="left:0px;top:0px;" width="600" height="760" viewBox="0 0 600 760"><rect x="271.5" y="431.5" width="66.5" height="295.5" fill="none" stroke="#86e05e" stroke-width="1"/><rect x="268.0" y="428.0" width="7" height="7" fill="#ffffff" stroke="#86e05e" stroke-width="1"/><rect x="300.5" y="428.0" width="7" height="7" fill="#ffffff" stroke="#86e05e" stroke-width="1"/><rect x="334.5" y="428.0" width="7" height="7" fill="#ffffff" stroke="#86e05e" stroke-width="1"/><rect x="268.0" y="576.0" width="7" height="7" fill="#ffffff" stroke="#86e05e" stroke-width="1"/><rect x="334.5" y="576.0" width="7" height="7" fill="#ffffff" stroke="#86e05e" stroke-width="1"/><rect x="268.0" y="723.5" width="7" height="7" fill="#ffffff" stroke="#86e05e" stroke-width="1"/><rect x="300.5" y="723.5" width="7" height="7" fill="#ffffff" stroke="#86e05e" stroke-width="1"/><rect x="334.5" y="723.5" width="7" height="7" fill="#ffffff" stroke="#86e05e" stroke-width="1"/></svg>
<div class="a" style="left:41px;top:1014px;width:1356px;height:16px;background:#474747;"></div>
<div class="a" style="left:41px;top:1014px;width:1356px;height:1px;background:#3a3a3a;"></div>
<div class="a" style="left:63px;top:1017px;width:23px;height:13px;background:#5c5c5c;border-radius:2px"></div>
<svg class="a" style="left:64px;top:1018px;" width="22" height="12" viewBox="0 0 22 12"><circle cx="6" cy="6" r="3.2" fill="none" stroke="#2a2a2a" stroke-width="2.6"/><path d="M6 0.5v2M6 9.5v2M0.5 6h2M9.5 6h2M2 2l1.5 1.5M8.5 8.5L10 10M2 10l1.5-1.5M8.5 3.5L10 2" stroke="#2a2a2a" stroke-width="1.6"/><rect x="16" y="1" width="2.2" height="6" fill="#2a2a2a"/><rect x="16" y="8.5" width="2.2" height="2.2" fill="#2a2a2a"/></svg>
<svg class="a" style="left:94px;top:1017px;" width="17" height="13" viewBox="0 0 17 13"><path d="M10 2 H1.5 V12 H13 V8" fill="none" stroke="#cfcfcf" stroke-width="1.6"/><path d="M4 10 C5 6 8 5 12 5" stroke="#cfcfcf" stroke-width="1.8" fill="none"/><path d="M11 1.5 L16 5 L11 8.5Z" fill="#cfcfcf"/></svg>
<svg class="a" style="left:121px;top:1019px;" width="12" height="11" viewBox="0 0 12 11"><rect x="0" y="0" width="2" height="10" fill="#cfcfcf"/><path d="M11 0 L3 5 L11 10Z" fill="#cfcfcf"/></svg>
<svg class="a" style="left:140px;top:1019px;" width="8" height="11" viewBox="0 0 8 11"><path d="M7 0 L0 5 L7 10Z" fill="#cfcfcf"/></svg>
<div class="t" style="left:157.0px;top:1019.7px;font-size:11px;color:#d0d0d0;">3</div>
<svg class="a" style="left:256px;top:1021px;" width="10" height="7" viewBox="0 0 10 7"><path d="M0 0 L10 0 L5 7Z" fill="#e0e0e0"/></svg>
<svg class="a" style="left:278px;top:1019px;" width="7" height="10" viewBox="0 0 7 10"><path d="M0 0 L6 5 L0 10Z" fill="#6a6a6a"/></svg>
<svg class="a" style="left:293px;top:1019px;" width="11" height="10" viewBox="0 0 11 10"><path d="M0 0 L7 5 L0 10Z" fill="#6a6a6a"/><rect x="8" y="0" width="2" height="10" fill="#6a6a6a"/></svg>
<svg class="a" style="left:311px;top:1016px;" width="19" height="14" viewBox="0 0 19 14"><circle cx="8" cy="8" r="6.5" fill="none" stroke="#cfcfcf" stroke-width="1.8"/><path d="M5 12 V4 H9 L12 7 H5" fill="none" stroke="#cfcfcf" stroke-width="1.5"/><rect x="15" y="12" width="2" height="2" fill="#ccc"/></svg>
<div class="t" style="left:344.0px;top:1020.7px;font-size:11px;color:#c8c8c8;letter-spacing:-0.14px;">[Grundprofil] (Arbeitsp...</div>
<svg class="a" style="left:470px;top:1020px;" width="10" height="8" viewBox="0 0 10 8"><path d="M0 0 L10 0 L5 8Z" fill="#e0e0e0"/></svg>
<svg class="a" style="left:487px;top:1017px;" width="14" height="13" viewBox="0 0 14 13"><circle cx="6.5" cy="7" r="5.8" fill="#3cb02e"/></svg>
<div class="t" style="left:505.0px;top:1020.7px;font-size:11px;color:#c8c8c8;letter-spacing:-0.56px;">Ohne Fehler</div>
<svg class="a" style="left:591px;top:1021px;" width="8" height="5" viewBox="0 0 8 5"><path d="M0 0 L8 0 L4 5Z" fill="#ddd"/></svg>
<div class="a" style="left:603px;top:1014px;width:124px;height:16px;background:#3c3c3c;"></div>
<svg class="a" style="left:609px;top:1017px;" width="9" height="11" viewBox="0 0 9 11"><path d="M8 0 L0 5.5 L8 11Z" fill="#e0e0e0"/></svg>
<div class="a" style="left:727px;top:1014px;width:670px;height:16px;background:#9a9a9a;"></div>
<!-- s4_pages -->
<div class="a" style="left:1397px;top:102px;width:273px;height:25px;background:#353535;"></div>
<div class="a" style="left:1397px;top:124px;width:1px;height:906px;background:#1c1c1c;"></div>
<div class="a" style="left:1398px;top:111px;width:1px;height:919px;background:#333333;"></div>
<div class="a" style="left:1399px;top:111px;width:249px;height:16px;background:#323232;"></div>
<svg class="a" style="left:1613px;top:116px;" width="10" height="7" viewBox="0 0 10 7"><path d="M4.5 0 L0 3.5 L4.5 7Z M9.5 0 L5 3.5 L9.5 7Z" fill="#d8d8d8"/></svg>
<svg class="a" style="left:1633px;top:116px;" width="9" height="8" viewBox="0 0 9 8"><path d="M1 1 L8 7 M8 1 L1 7" stroke="#e0e0e0" stroke-width="1.8"/></svg>
<div class="a" style="left:1399px;top:127px;width:249px;height:20px;background:#333333;"></div>
<div class="a" style="left:1399px;top:127px;width:58px;height:21px;background:#4a4a4a;"></div>
<svg class="a" style="left:1404px;top:131px;" width="7" height="11" viewBox="0 0 7 11"><path d="M0.8 4.5 L3.5 1.2 L6.2 4.5 M0.8 6.5 L3.5 9.8 L6.2 6.5" fill="none" stroke="#d0d0d0" stroke-width="1.4"/></svg>
<div class="t" style="left:1414.0px;top:130.9px;font-size:12.6px;color:#e8e8e8;font-weight:bold;letter-spacing:-0.63px;">Seiten</div>
<svg class="a" style="left:1625px;top:132px;" width="18" height="11" viewBox="0 0 18 11"><path d="M0 3 L5 3 L2.5 6Z" fill="#c8c8c8"/><rect x="6" y="0.0" width="12" height="1.5" fill="#c8c8c8"/><rect x="6" y="2.6" width="12" height="1.5" fill="#c8c8c8"/><rect x="6" y="5.2" width="12" height="1.5" fill="#c8c8c8"/><rect x="6" y="7.800000000000001" width="12" height="1.5" fill="#c8c8c8"/></svg>
<div class="a" style="left:1399px;top:147px;width:249px;height:847px;background:#4a4a4a;"></div>
<div class="t" style="left:1402.0px;top:165.9px;font-size:10.8px;color:#c4c4c4;letter-spacing:-0.07px;">[Ohne]</div>
<div class="t" style="left:1402.0px;top:200.3px;font-size:10.8px;color:#c4c4c4;letter-spacing:-0.20px;">A-Musterseite</div>
<div class="a" style="left:1609px;top:152px;width:12px;height:28px;background:#ffffff;"></div>
<div class="a" style="left:1609px;top:187px;width:12px;height:29px;background:#ffffff;"></div>
<div class="a" style="left:1632px;top:147px;width:16px;height:88px;background:#444444;"></div>
<svg class="a" style="left:1635px;top:153px;" width="10" height="6" viewBox="0 0 10 6"><path d="M0 6 L5 0 L10 6Z" fill="#6c6c6c"/></svg>
<svg class="a" style="left:1635px;top:225px;" width="10" height="6" viewBox="0 0 10 6"><path d="M0 0 L5 6 L10 0Z" fill="#6c6c6c"/></svg>
<div class="a" style="left:1398px;top:235px;width:250px;height:1px;background:#3c3c3c;"></div>
<div class="a" style="left:1398px;top:236px;width:250px;height:2px;background:#555555;"></div>
<div class="a" style="left:1398px;top:238px;width:250px;height:1px;background:#3c3c3c;"></div>
<div class="a" style="left:1632px;top:239px;width:16px;height:755px;background:#444444;"></div>
<svg class="a" style="left:1635px;top:244px;" width="10" height="6" viewBox="0 0 10 6"><path d="M0 6 L5 0 L10 6Z" fill="#6c6c6c"/></svg>
<svg class="a" style="left:1635px;top:982px;" width="10" height="6" viewBox="0 0 10 6"><path d="M0 0 L5 6 L10 0Z" fill="#6c6c6c"/></svg>
<svg class="a" style="left:1429px;top:243px;" width="14" height="8" viewBox="0 0 14 8"><path d="M0 0 L14 0 L7 8Z" fill="#8a8a8a"/></svg>
<svg class="a" style="left:1418px;top:252px;" width="38" height="87" viewBox="0 0 38 87"><rect x="0.5" y="0.5" width="37" height="86" fill="#16334a" stroke="#6f7f8c" stroke-width="1"/><path d="M1 6 L11 15 L11 42 L1 35Z" fill="#e2403a"/><path d="M1 35 L11 42 L1 50Z" fill="#0c2030"/><path d="M1 50 L11 42 L11 70 L1 79Z" fill="#3bb0d8"/><g transform="translate(30,55) rotate(-90)"><text x="0" y="0" font-family="Liberation Sans" font-size="11" font-weight="bold" fill="#ffffff" textLength="37">Campell</text></g><path d="M31.5 18 L31.5 50" stroke="#ddd" stroke-width="0.6"/><circle cx="25" cy="61" r="5.5" fill="#e2403a"/><path d="M25 55.5 A5.5 5.5 0 0 1 25 66.5Z" fill="#3bb0d8"/><rect x="24" y="57.5" width="2" height="7" fill="#16334a"/><rect x="14" y="0.5" width="10" height="12" fill="#ffffff"/></svg>
<div class="t" style="left:1431.5px;top:252.7px;font-size:11px;color:#111;">A</div>
<div class="t" style="left:1432.0px;top:349.1px;font-size:10.5px;color:#c8c8c8;">1</div>
<svg class="a" style="left:1418px;top:374px;" width="38" height="87" viewBox="0 0 38 87"><rect x="0.5" y="0.5" width="37" height="86" fill="#87a6c2" stroke="#8a9aa8" stroke-width="1"/><g transform="translate(11,16) rotate(90)"><text x="0" y="-1" font-family="Liberation Sans" font-size="17" font-weight="bold" fill="#16334a" textLength="34">SAIL</text></g><path d="M10 18 L10 68" stroke="#16334a" stroke-width="1"/><path d="M20 60 L31 51 L31 60Z" fill="#f2f6fa"/><path d="M12 70 L31 60 L21 60Z" fill="#16334a"/><rect x="14" y="0.5" width="10" height="12" fill="#ffffff"/></svg>
<div class="t" style="left:1431.5px;top:374.7px;font-size:11px;color:#111;">A</div>
<div class="t" style="left:1432.0px;top:472.6px;font-size:10.5px;color:#c8c8c8;">2</div>
<svg class="a" style="left:1458px;top:411px;" width="15" height="13" viewBox="0 0 15 13"><path d="M2 7 C2 3 5 1.5 9 2.5" fill="none" stroke="#e0e0e0" stroke-width="1.6"/><path d="M8 0 L12 3 L8 5.5Z" fill="#e0e0e0"/><path d="M13 6 C13 10 10 11.5 6 10.5" fill="none" stroke="#e0e0e0" stroke-width="1.6"/><path d="M7 13 L3 10 L7 7.5Z" fill="#e0e0e0"/></svg>
<svg class="a" style="left:1418px;top:497px;" width="38" height="87" viewBox="0 0 38 87"><rect x="0.5" y="0.5" width="37" height="86" fill="#a9acb1" stroke="#8f9296" stroke-width="1"/><rect x="8" y="59" width="10.5" height="10" fill="#5da85a"/><rect x="18.5" y="59" width="10.5" height="10" fill="#d0404a"/><rect x="8" y="69" width="10.5" height="10" fill="#2a80a0"/><rect x="18.5" y="69" width="10.5" height="10" fill="#d49030"/><path d="M10 64h16M10 74h16" stroke="#ddd" stroke-width="0.8" opacity="0.7"/><rect x="14" y="0.5" width="10" height="12" fill="#ffffff"/></svg>
<div class="t" style="left:1431.5px;top:498.7px;font-size:11px;color:#111;font-weight:bold;">A</div>
<svg class="a" style="left:1458px;top:533px;" width="15" height="13" viewBox="0 0 15 13"><path d="M2 7 C2 3 5 1.5 9 2.5" fill="none" stroke="#e0e0e0" stroke-width="1.6"/><path d="M8 0 L12 3 L8 5.5Z" fill="#e0e0e0"/><path d="M13 6 C13 10 10 11.5 6 10.5" fill="none" stroke="#e0e0e0" stroke-width="1.6"/><path d="M7 13 L3 10 L7 7.5Z" fill="#e0e0e0"/></svg>
<div class="a" style="left:1426px;top:593px;width:17px;height:13px;background:#3a4b5c;"></div>
<div class="t" style="left:1431.0px;top:595.2px;font-size:11px;color:#ffffff;font-weight:bold;">3</div>
<div class="a" style="left:1398px;top:994px;width:250px;height:24px;background:#474747;"></div>
<div class="a" style="left:1398px;top:994px;width:250px;height:1px;background:#3e3e3e;"></div>
<div class="t" style="left:1402.0px;top:1002.3px;font-size:10.8px;color:#c8c8c8;letter-spacing:-0.16px;">3 Seiten auf 3 Druckböge</div>
<svg class="a" style="left:1527px;top:998px;" width="22" height="15" viewBox="0 0 22 15"><rect x="0" y="5" width="12" height="9" fill="#d0d0d0"/><path d="M6 1 H14 L17 4 V13 H6Z" fill="#d0d0d0" stroke="#474747" stroke-width="1"/><path d="M9 5 L12 11" stroke="#555" stroke-width="1"/><path d="M18 11 L21 11 L19.5 13Z" fill="#ddd"/></svg>
<svg class="a" style="left:1566px;top:999px;" width="14" height="14" viewBox="0 0 14 14"><path d="M0 0 H13 V13 H4 L0 9Z" fill="#d0d0d0"/><path d="M0 9 L4 9 L4 13Z" fill="#777"/></svg>
<svg class="a" style="left:1601px;top:997px;" width="16" height="16" viewBox="0 0 16 16"><path d="M5 2 V0.5 H11 V2" fill="none" stroke="#d0d0d0" stroke-width="1.3"/><rect x="0.5" y="2.5" width="15" height="2.5" fill="#d0d0d0"/><path d="M2 6 H14 L13 15 H3Z" fill="#d0d0d0"/><path d="M6 7.5V13.5M8 7.5V13.5M10 7.5V13.5" stroke="#474747" stroke-width="1"/></svg>
<svg class="a" style="left:1636px;top:1004px;" width="11" height="12" viewBox="0 0 11 12"><rect x="10.0" y="11.0" width="1" height="1" fill="#888"/><rect x="7.8" y="11.0" width="1" height="1" fill="#888"/><rect x="10.0" y="8.8" width="1" height="1" fill="#888"/><rect x="5.6" y="11.0" width="1" height="1" fill="#888"/><rect x="7.8" y="8.8" width="1" height="1" fill="#888"/><rect x="10.0" y="6.6" width="1" height="1" fill="#888"/><rect x="3.3999999999999995" y="11.0" width="1" height="1" fill="#888"/><rect x="5.6" y="8.8" width="1" height="1" fill="#888"/><rect x="7.8" y="6.6" width="1" height="1" fill="#888"/><rect x="10.0" y="4.3999999999999995" width="1" height="1" fill="#888"/><rect x="1.1999999999999993" y="11.0" width="1" height="1" fill="#888"/><rect x="3.3999999999999995" y="8.8" width="1" height="1" fill="#888"/><rect x="5.6" y="6.6" width="1" height="1" fill="#888"/><rect x="7.8" y="4.3999999999999995" width="1" height="1" fill="#888"/><rect x="10.0" y="2.1999999999999993" width="1" height="1" fill="#888"/></svg>
<div class="a" style="left:1398px;top:1018px;width:250px;height:12px;background:#3c3c3c;"></div>
<div class="a" style="left:1398px;top:1018px;width:250px;height:1px;background:#2a2a2a;"></div>
<svg class="a" style="left:1512px;top:1021px;" width="24" height="7" viewBox="0 0 24 7"><rect x="0.0" y="0" width="1.2" height="7" fill="#1a1a1a"/><rect x="2.4" y="0" width="1.2" height="7" fill="#1a1a1a"/><rect x="4.8" y="0" width="1.2" height="7" fill="#1a1a1a"/><rect x="7.199999999999999" y="0" width="1.2" height="7" fill="#1a1a1a"/><rect x="9.6" y="0" width="1.2" height="7" fill="#1a1a1a"/><rect x="12.0" y="0" width="1.2" height="7" fill="#1a1a1a"/><rect x="14.399999999999999" y="0" width="1.2" height="7" fill="#1a1a1a"/><rect x="16.8" y="0" width="1.2" height="7" fill="#1a1a1a"/><rect x="19.2" y="0" width="1.2" height="7" fill="#1a1a1a"/><rect x="21.599999999999998" y="0" width="1.2" height="7" fill="#1a1a1a"/></svg>
<div class="a" style="left:1648px;top:124px;width:22px;height:906px;background:#3a3a3a;"></div>
<div class="a" style="left:1648px;top:127px;width:1px;height:903px;background:#2e2e2e;"></div>
<div class="a" style="left:1668px;top:102px;width:2px;height:928px;background:#2a2a2a;"></div>
<svg class="a" style="left:1654px;top:130px;" width="13" height="8" viewBox="0 0 13 8"><path d="M0 8 L6.5 0 L13 8Z" fill="#e6e6e6"/></svg>
<div class="a" style="left:1651px;top:755px;width:17px;height:138px;background:#9a9a9a;"></div>
<svg class="a" style="left:1654px;top:1000px;" width="13" height="8" viewBox="0 0 13 8"><path d="M0 0 L6.5 8 L13 0Z" fill="#e6e6e6"/></svg>
<!-- s5_dock -->
<div class="a" style="left:1670px;top:102px;width:250px;height:928px;background:#353535;"></div>
<div class="a" style="left:1670px;top:102px;width:2px;height:928px;background:#2a2a2a;"></div>
<svg class="a" style="left:1905px;top:105px;" width="10" height="7" viewBox="0 0 10 7"><path d="M0 0 L4.5 3.5 L0 7Z M5 0 L9.5 3.5 L5 7Z" fill="#d8d8d8"/></svg>
<div class="a" style="left:1672px;top:116px;width:248px;height:21px;background:#333333;"></div>
<div class="a" style="left:1672px;top:116px;width:104px;height:21px;background:#3a3a3a;"></div>
<div class="t" style="left:1680.0px;top:120.8px;font-size:12.6px;color:#9a9a9a;font-weight:bold;letter-spacing:-0.44px;">Verknüpfungen</div>
<div class="a" style="left:1777px;top:116px;width:63px;height:21px;background:#4a4a4a;"></div>
<svg class="a" style="left:1782px;top:121px;" width="7" height="11" viewBox="0 0 7 11"><path d="M0.8 4.5 L3.5 1.2 L6.2 4.5 M0.8 6.5 L3.5 9.8 L6.2 6.5" fill="none" stroke="#d0d0d0" stroke-width="1.4"/></svg>
<div class="t" style="left:1793.0px;top:120.8px;font-size:12.6px;color:#e8e8e8;font-weight:bold;letter-spacing:-0.75px;">Ebenen</div>
<svg class="a" style="left:1898px;top:121px;" width="18" height="11" viewBox="0 0 18 11"><path d="M0 3 L5 3 L2.5 6Z" fill="#c8c8c8"/><rect x="6" y="0.0" width="12" height="1.5" fill="#c8c8c8"/><rect x="6" y="2.6" width="12" height="1.5" fill="#c8c8c8"/><rect x="6" y="5.2" width="12" height="1.5" fill="#c8c8c8"/><rect x="6" y="7.800000000000001" width="12" height="1.5" fill="#c8c8c8"/></svg>
<div class="a" style="left:1672px;top:137px;width:248px;height:162px;background:#4a4a4a;"></div>
<div class="a" style="left:1672px;top:138px;width:233px;height:23px;background:#4a4a4a;"></div>
<div class="a" style="left:1672px;top:160px;width:233px;height:1px;background:#3c3c3c;"></div>
<div class="a" style="left:1696px;top:138px;width:1px;height:22px;background:#3e3e3e;"></div>
<svg class="a" style="left:1676px;top:144px;" width="15" height="10" viewBox="0 0 15 10"><path d="M0.5 5 C4 0 11 0 14.5 5 C11 10 4 10 0.5 5Z" fill="#cfcfcf"/><circle cx="7.5" cy="5" r="2.8" fill="#2a2a2a"/><circle cx="6.7" cy="4.2" r="0.9" fill="#ddd"/></svg>
<div class="a" style="left:1717px;top:141px;width:5px;height:17px;background:#4ee04a;"></div>
<svg class="a" style="left:1726px;top:146px;" width="10" height="6" viewBox="0 0 10 6"><path d="M0 0 L10 0 L5.0 6Z" fill="#d6d6d6"/></svg>
<div class="t" style="left:1739.0px;top:145.9px;font-size:10.8px;color:#c8c8c8;">Meine Ebene</div>
<div class="a" style="left:1888px;top:145px;width:9px;height:9px;background:#55e055;border:2px solid #111"></div>
<div class="a" style="left:1672px;top:161px;width:233px;height:23px;background:#4a4a4a;"></div>
<div class="a" style="left:1722px;top:161px;width:180px;height:23px;background:#4c5a6a;"></div>
<div class="a" style="left:1672px;top:183px;width:233px;height:1px;background:#3c3c3c;"></div>
<div class="a" style="left:1696px;top:161px;width:1px;height:22px;background:#3e3e3e;"></div>
<svg class="a" style="left:1676px;top:167px;" width="15" height="10" viewBox="0 0 15 10"><path d="M0.5 5 C4 0 11 0 14.5 5 C11 10 4 10 0.5 5Z" fill="#cfcfcf"/><circle cx="7.5" cy="5" r="2.8" fill="#2a2a2a"/><circle cx="6.7" cy="4.2" r="0.9" fill="#ddd"/></svg>
<div class="a" style="left:1717px;top:164px;width:5px;height:17px;background:#4ee04a;"></div>
<svg class="a" style="left:1739px;top:169px;" width="10" height="6" viewBox="0 0 10 6"><path d="M0 0 L10 0 L5.0 6Z" fill="#c8d8ea"/></svg>
<div class="t" style="left:1752.0px;top:168.9px;font-size:10.8px;color:#ffffff;font-weight:bold;">Logo</div>
<div class="a" style="left:1889px;top:169px;width:7px;height:7px;background:#aaf0a0;border:2px solid #111"></div>
<div class="a" style="left:1672px;top:184px;width:233px;height:23px;background:#4a4a4a;"></div>
<div class="a" style="left:1672px;top:206px;width:233px;height:1px;background:#3c3c3c;"></div>
<div class="a" style="left:1696px;top:184px;width:1px;height:22px;background:#3e3e3e;"></div>
<svg class="a" style="left:1676px;top:190px;" width="15" height="10" viewBox="0 0 15 10"><path d="M0.5 5 C4 0 11 0 14.5 5 C11 10 4 10 0.5 5Z" fill="#cfcfcf"/><circle cx="7.5" cy="5" r="2.8" fill="#2a2a2a"/><circle cx="6.7" cy="4.2" r="0.9" fill="#ddd"/></svg>
<div class="a" style="left:1717px;top:187px;width:5px;height:17px;background:#4ee04a;"></div>
<svg class="a" style="left:1751px;top:192px;" width="10" height="6" viewBox="0 0 10 6"><path d="M0 0 L10 0 L5.0 6Z" fill="#d6d6d6"/></svg>
<div class="t" style="left:1764.0px;top:191.9px;font-size:10.8px;color:#c8c8c8;">Besteck</div>
<div class="a" style="left:1889px;top:192px;width:7px;height:7px;background:#aaf0a0;border:2px solid #111"></div>
<div class="a" style="left:1672px;top:207px;width:233px;height:23px;background:#4a4a4a;"></div>
<div class="a" style="left:1672px;top:229px;width:233px;height:1px;background:#3c3c3c;"></div>
<div class="a" style="left:1696px;top:207px;width:1px;height:22px;background:#3e3e3e;"></div>
<svg class="a" style="left:1676px;top:213px;" width="15" height="10" viewBox="0 0 15 10"><path d="M0.5 5 C4 0 11 0 14.5 5 C11 10 4 10 0.5 5Z" fill="#cfcfcf"/><circle cx="7.5" cy="5" r="2.8" fill="#2a2a2a"/><circle cx="6.7" cy="4.2" r="0.9" fill="#ddd"/></svg>
<div class="a" style="left:1717px;top:210px;width:5px;height:17px;background:#4ee04a;"></div>
<div class="t" style="left:1776.0px;top:214.9px;font-size:10.8px;color:#c8c8c8;">Gabel</div>
<div class="a" style="left:1888px;top:214px;width:9px;height:9px;background:#55e055;border:2px solid #111"></div>
<div class="a" style="left:1672px;top:230px;width:233px;height:23px;background:#4a4a4a;"></div>
<div class="a" style="left:1672px;top:252px;width:233px;height:1px;background:#3c3c3c;"></div>
<div class="a" style="left:1696px;top:230px;width:1px;height:22px;background:#3e3e3e;"></div>
<svg class="a" style="left:1676px;top:236px;" width="15" height="10" viewBox="0 0 15 10"><path d="M0.5 5 C4 0 11 0 14.5 5 C11 10 4 10 0.5 5Z" fill="#cfcfcf"/><circle cx="7.5" cy="5" r="2.8" fill="#2a2a2a"/><circle cx="6.7" cy="4.2" r="0.9" fill="#ddd"/></svg>
<div class="a" style="left:1717px;top:233px;width:5px;height:17px;background:#4ee04a;"></div>
<div class="t" style="left:1776.0px;top:237.9px;font-size:10.8px;color:#c8c8c8;">Messer</div>
<div class="a" style="left:1888px;top:237px;width:9px;height:9px;background:transparent;border:1px solid #3a3a3a"></div>
<div class="a" style="left:1672px;top:253px;width:233px;height:23px;background:#4a4a4a;"></div>
<div class="a" style="left:1672px;top:275px;width:233px;height:1px;background:#3c3c3c;"></div>
<div class="a" style="left:1696px;top:253px;width:1px;height:22px;background:#3e3e3e;"></div>
<svg class="a" style="left:1676px;top:259px;" width="15" height="10" viewBox="0 0 15 10"><path d="M0.5 5 C4 0 11 0 14.5 5 C11 10 4 10 0.5 5Z" fill="#cfcfcf"/><circle cx="7.5" cy="5" r="2.8" fill="#2a2a2a"/><circle cx="6.7" cy="4.2" r="0.9" fill="#ddd"/></svg>
<div class="a" style="left:1717px;top:256px;width:5px;height:17px;background:#4ee04a;"></div>
<svg class="a" style="left:1752px;top:259px;" width="6" height="10" viewBox="0 0 6 10"><path d="M0 0 L6 5 L0 10Z" fill="#d0d0d0"/></svg>
<div class="t" style="left:1764.0px;top:260.9px;font-size:10.8px;color:#c8c8c8;">Quadrate</div>
<div class="a" style="left:1888px;top:260px;width:9px;height:9px;background:transparent;border:1px solid #3a3a3a"></div>
<div class="a" style="left:1672px;top:276px;width:233px;height:22px;background:#4a4a4a;"></div>
<div class="a" style="left:1672px;top:297px;width:233px;height:1px;background:#3c3c3c;"></div>
<div class="a" style="left:1696px;top:276px;width:1px;height:21px;background:#3e3e3e;"></div>
<svg class="a" style="left:1676px;top:282px;" width="15" height="10" viewBox="0 0 15 10"><path d="M0.5 5 C4 0 11 0 14.5 5 C11 10 4 10 0.5 5Z" fill="#cfcfcf"/><circle cx="7.5" cy="5" r="2.8" fill="#2a2a2a"/><circle cx="6.7" cy="4.2" r="0.9" fill="#ddd"/></svg>
<div class="a" style="left:1717px;top:279px;width:5px;height:16px;background:#ff7a1a;"></div>
<svg class="a" style="left:1728px;top:282px;" width="6" height="10" viewBox="0 0 6 10"><path d="M0 0 L6 5 L0 10Z" fill="#d0d0d0"/></svg>
<div class="t" style="left:1739.0px;top:283.9px;font-size:10.8px;color:#c8c8c8;">Vorlage</div>
<div class="a" style="left:1888px;top:283px;width:9px;height:9px;background:transparent;border:1px solid #3a3a3a"></div>
<svg class="a" style="left:1862px;top:140px;" width="17" height="17" viewBox="0 0 17 17"><path d="M2 15 L4 9 L10 3 L14 7 L8 13Z" fill="#c6c6c6"/><path d="M10 1 L16 7" stroke="#cfcfcf" stroke-width="2.5"/><path d="M2 15 L7 10" stroke="#555" stroke-width="0.8"/></svg>
<svg class="a" style="left:1700px;top:281px;" width="12" height="13" viewBox="0 0 12 13"><path d="M3 6 V4 a3 3 0 0 1 6 0 V6" fill="none" stroke="#c8c8c8" stroke-width="1.6"/><rect x="1" y="6" width="10" height="7" fill="#c8c8c8"/></svg>
<div class="a" style="left:1905px;top:137px;width:15px;height:162px;background:#3e3e3e;"></div>
<svg class="a" style="left:1908px;top:144px;" width="9" height="6" viewBox="0 0 9 6"><path d="M0 6 L4.5 0 L9 6Z" fill="#e0e0e0"/></svg>
<div class="a" style="left:1908px;top:157px;width:11px;height:103px;background:#9a9a9a;"></div>
<svg class="a" style="left:1908px;top:285px;" width="9" height="6" viewBox="0 0 9 6"><path d="M0 0 L4.5 6 L9 0Z" fill="#e0e0e0"/></svg>
<div class="a" style="left:1669px;top:157px;width:238px;height:122px;background:transparent;border:5px solid #ff0a0a"></div>
<div class="a" style="left:1672px;top:299px;width:248px;height:22px;background:#474747;"></div>
<div class="t" style="left:1677.0px;top:303.9px;font-size:10.8px;color:#c8c8c8;letter-spacing:-0.33px;">Seite: 3, 2 Ebenen</div>
<svg class="a" style="left:1840px;top:302px;" width="14" height="14" viewBox="0 0 14 14"><path d="M0 0 H13 V13 H4 L0 9Z" fill="#d0d0d0"/><path d="M0 9 L4 9 L4 13Z" fill="#777"/></svg>
<svg class="a" style="left:1876px;top:300px;" width="16" height="16" viewBox="0 0 16 16"><path d="M5 2 V0.5 H11 V2" fill="none" stroke="#d0d0d0" stroke-width="1.3"/><rect x="0.5" y="2.5" width="15" height="2.5" fill="#d0d0d0"/><path d="M2 6 H14 L13 15 H3Z" fill="#d0d0d0"/><path d="M6 7.5V13.5M8 7.5V13.5M10 7.5V13.5" stroke="#474747" stroke-width="1"/></svg>
<svg class="a" style="left:1908px;top:307px;" width="11" height="11" viewBox="0 0 11 11"><rect x="10.0" y="10.0" width="1" height="1" fill="#777"/><rect x="7.8" y="10.0" width="1" height="1" fill="#777"/><rect x="10.0" y="7.8" width="1" height="1" fill="#777"/><rect x="5.6" y="10.0" width="1" height="1" fill="#777"/><rect x="7.8" y="7.8" width="1" height="1" fill="#777"/><rect x="10.0" y="5.6" width="1" height="1" fill="#777"/><rect x="3.3999999999999995" y="10.0" width="1" height="1" fill="#777"/><rect x="5.6" y="7.8" width="1" height="1" fill="#777"/><rect x="7.8" y="5.6" width="1" height="1" fill="#777"/><rect x="10.0" y="3.3999999999999995" width="1" height="1" fill="#777"/><rect x="1.1999999999999993" y="10.0" width="1" height="1" fill="#777"/><rect x="3.3999999999999995" y="7.8" width="1" height="1" fill="#777"/><rect x="5.6" y="5.6" width="1" height="1" fill="#777"/><rect x="7.8" y="3.3999999999999995" width="1" height="1" fill="#777"/><rect x="10.0" y="1.1999999999999993" width="1" height="1" fill="#777"/></svg>
<div class="a" style="left:1672px;top:319px;width:248px;height:2px;background:#2e2e2e;"></div>
<div class="a" style="left:1672px;top:321px;width:248px;height:21px;background:#333333;"></div>
<div class="a" style="left:1672px;top:321px;width:58px;height:21px;background:#3a3a3a;"></div>
<div class="t" style="left:1680.0px;top:325.8px;font-size:12.6px;color:#9a9a9a;font-weight:bold;letter-spacing:-0.38px;">Kontur</div>
<div class="a" style="left:1731px;top:321px;width:82px;height:21px;background:#4a4a4a;"></div>
<svg class="a" style="left:1736px;top:326px;" width="7" height="11" viewBox="0 0 7 11"><path d="M0.8 4.5 L3.5 1.2 L6.2 4.5 M0.8 6.5 L3.5 9.8 L6.2 6.5" fill="none" stroke="#d0d0d0" stroke-width="1.4"/></svg>
<div class="t" style="left:1746.0px;top:325.8px;font-size:12.6px;color:#e8e8e8;font-weight:bold;letter-spacing:-0.36px;">Farbfelder</div>
<div class="a" style="left:1813px;top:321px;width:58px;height:21px;background:#3a3a3a;"></div>
<div class="t" style="left:1820.0px;top:325.8px;font-size:12.6px;color:#9a9a9a;font-weight:bold;letter-spacing:-0.00px;">Verlauf</div>
<svg class="a" style="left:1898px;top:326px;" width="18" height="11" viewBox="0 0 18 11"><path d="M0 3 L5 3 L2.5 6Z" fill="#c8c8c8"/><rect x="6" y="0.0" width="12" height="1.5" fill="#c8c8c8"/><rect x="6" y="2.6" width="12" height="1.5" fill="#c8c8c8"/><rect x="6" y="5.2" width="12" height="1.5" fill="#c8c8c8"/><rect x="6" y="7.800000000000001" width="12" height="1.5" fill="#c8c8c8"/></svg>
<div class="a" style="left:1672px;top:342px;width:248px;height:392px;background:#4a4a4a;"></div>
<div class="a" style="left:1678px;top:345px;width:14px;height:14px;background:#f8f8f8;border:1px solid #2a2a2a"></div>
<div class="a" style="left:1688px;top:354px;width:13px;height:13px;background:#dcdcdc;border:1px solid #555"></div>
<svg class="a" style="left:1688px;top:354px;" width="13" height="13" viewBox="0 0 13 13"><rect x="3" y="3" width="7" height="7" fill="#444"/><path d="M1.5 11.5 L11.5 1.5" stroke="#e8202a" stroke-width="2.2"/></svg>
<svg class="a" style="left:1695px;top:344px;" width="8" height="8" viewBox="0 0 8 8"><path d="M1 2 C5 2 6 3 6 7" fill="none" stroke="#ccc" stroke-width="1.2"/><path d="M0 2 L2.5 0 V4Z M6 8 L4 5.5 H8Z" fill="#ccc"/></svg>
<div class="a" style="left:1718px;top:351px;width:12px;height:13px;background:#3a3a3a;border:1.5px solid #c8c8c8;outline:1px solid #2a2a2a"></div>
<div class="t" style="left:1736.0px;top:351.2px;font-size:14.5px;color:#8a8a8a;font-family:'Liberation Serif',serif;">T</div>
<div class="t" style="left:1785.5px;top:353.5px;font-size:10.8px;color:#c8c8c8;letter-spacing:-0.28px;">Farbton:</div>
<div class="a" style="left:1831px;top:350px;width:35px;height:13px;background:#7c7c7c;border:1px solid #555"></div>
<div class="t" style="left:1834.0px;top:351.6px;font-size:10.5px;color:#565656;">100</div>
<div class="a" style="left:1867px;top:350px;width:14px;height:13px;background:#4f4f4f;"></div>
<svg class="a" style="left:1871px;top:352px;" width="6" height="9" viewBox="0 0 6 9"><path d="M0 0 L6 4.5 L0 9Z" fill="#6a6a6a"/></svg>
<div class="t" style="left:1885.0px;top:353.9px;font-size:10.8px;color:#c8c8c8;">%</div>
<div class="a" style="left:1672px;top:373px;width:233px;height:22px;background:#4b4b4b;"></div>
<div class="a" style="left:1672px;top:395px;width:233px;height:2px;background:#3e3e3e;"></div>
<div class="a" style="left:1690px;top:376px;width:15px;height:15px;background:#ffffff;border:1.5px solid #111"></div>
<svg class="a" style="left:1690px;top:376px;" width="15" height="15" viewBox="0 0 15 15"><path d="M2 13 L13 2" stroke="#e01a22" stroke-width="2.2"/></svg>
<div class="t" style="left:1708.0px;top:380.9px;font-size:10.8px;color:#c4c4c4;">[Ohne]</div>
<svg class="a" style="left:1848px;top:378px;" width="15" height="15" viewBox="0 0 15 15"><path d="M3 13 L5 9 L11 2 L13.5 4.5 L7 11Z" fill="#c8c8c8"/><path d="M1.5 1.5 L13.5 13.5" stroke="#e0e0e0" stroke-width="1.4"/><path d="M2 13.5 L4 10 L5.5 11.5Z" fill="#ddd"/></svg>
<svg class="a" style="left:1885px;top:378px;" width="14" height="14" viewBox="0 0 14 14"><rect x="0.5" y="0.5" width="13" height="13" fill="#d8d8d8" stroke="#eee"/><path d="M2 12 L12 2" stroke="#e02a2a" stroke-width="1.3"/></svg>
<div class="a" style="left:1672px;top:397px;width:233px;height:22px;background:#4b4b4b;"></div>
<div class="a" style="left:1672px;top:419px;width:233px;height:2px;background:#3e3e3e;"></div>
<div class="a" style="left:1690px;top:400px;width:15px;height:15px;background:#000000;border:1.5px solid #111"></div>
<div class="t" style="left:1708.0px;top:404.9px;font-size:10.8px;color:#c4c4c4;">[Passermarken]</div>
<svg class="a" style="left:1848px;top:402px;" width="15" height="15" viewBox="0 0 15 15"><path d="M3 13 L5 9 L11 2 L13.5 4.5 L7 11Z" fill="#c8c8c8"/><path d="M1.5 1.5 L13.5 13.5" stroke="#e0e0e0" stroke-width="1.4"/><path d="M2 13.5 L4 10 L5.5 11.5Z" fill="#ddd"/></svg>
<svg class="a" style="left:1885px;top:402px;" width="14" height="13" viewBox="0 0 14 13"><rect x="0.5" y="0.5" width="13" height="12" fill="#cfcfcf" stroke="#e6e6e6"/><circle cx="7" cy="6.5" r="3.5" fill="none" stroke="#333" stroke-width="1.1"/><path d="M7 1.5v10M2 6.5h10" stroke="#333" stroke-width="1"/></svg>
<div class="a" style="left:1672px;top:421px;width:233px;height:22px;background:#4b4b4b;"></div>
<div class="a" style="left:1672px;top:443px;width:233px;height:2px;background:#3e3e3e;"></div>
<div class="a" style="left:1672px;top:420px;width:233px;height:24px;background:#48586a;"></div>
<div class="a" style="left:1690px;top:424px;width:15px;height:15px;background:#ffffff;border:1.5px solid #111"></div>
<div class="t" style="left:1708.0px;top:428.9px;font-size:10.8px;color:#ffffff;font-weight:bold;">[Papier]</div>
<div class="a" style="left:1672px;top:445px;width:233px;height:22px;background:#4b4b4b;"></div>
<div class="a" style="left:1672px;top:467px;width:233px;height:2px;background:#3e3e3e;"></div>
<div class="a" style="left:1690px;top:448px;width:15px;height:15px;background:#000000;border:1.5px solid #111"></div>
<div class="t" style="left:1708.0px;top:452.9px;font-size:10.8px;color:#c4c4c4;">[Schwarz]</div>
<svg class="a" style="left:1848px;top:450px;" width="15" height="15" viewBox="0 0 15 15"><path d="M3 13 L5 9 L11 2 L13.5 4.5 L7 11Z" fill="#c8c8c8"/><path d="M1.5 1.5 L13.5 13.5" stroke="#e0e0e0" stroke-width="1.4"/><path d="M2 13.5 L4 10 L5.5 11.5Z" fill="#ddd"/></svg>
<svg class="a" style="left:1866px;top:449px;" width="15" height="15" viewBox="0 0 15 15"><rect x="0.5" y="0.5" width="14" height="14" fill="#c8c8c8" stroke="#eee" stroke-width="1"/><rect x="2" y="2" width="11" height="11" fill="#8c8c8c"/><rect x="2" y="2" width="1.2" height="1.2" fill="#777"/><rect x="2" y="6" width="1.2" height="1.2" fill="#777"/><rect x="2" y="10" width="1.2" height="1.2" fill="#777"/><rect x="4" y="4" width="1.2" height="1.2" fill="#777"/><rect x="4" y="8" width="1.2" height="1.2" fill="#777"/><rect x="4" y="12" width="1.2" height="1.2" fill="#777"/><rect x="6" y="2" width="1.2" height="1.2" fill="#777"/><rect x="6" y="6" width="1.2" height="1.2" fill="#777"/><rect x="6" y="10" width="1.2" height="1.2" fill="#777"/><rect x="8" y="4" width="1.2" height="1.2" fill="#777"/><rect x="8" y="8" width="1.2" height="1.2" fill="#777"/><rect x="8" y="12" width="1.2" height="1.2" fill="#777"/><rect x="10" y="2" width="1.2" height="1.2" fill="#777"/><rect x="10" y="6" width="1.2" height="1.2" fill="#777"/><rect x="10" y="10" width="1.2" height="1.2" fill="#777"/><rect x="12" y="4" width="1.2" height="1.2" fill="#777"/><rect x="12" y="8" width="1.2" height="1.2" fill="#777"/><rect x="12" y="12" width="1.2" height="1.2" fill="#777"/></svg>
<svg class="a" style="left:1885px;top:449px;" width="15" height="15" viewBox="0 0 15 15"><rect x="0" y="0" width="15" height="15" fill="#f0f0f0"/><path d="M1.5 1.5 H13.5 L7.5 7.5Z" fill="#e020e0"/><path d="M13.5 1.5 V13.5 L7.5 7.5Z" fill="#f0f020"/><path d="M13.5 13.5 H1.5 L7.5 7.5Z" fill="#080808"/><path d="M1.5 13.5 V1.5 L7.5 7.5Z" fill="#20e0e8"/></svg>
<div class="a" style="left:1672px;top:469px;width:233px;height:22px;background:#4b4b4b;"></div>
<div class="a" style="left:1672px;top:491px;width:233px;height:2px;background:#3e3e3e;"></div>
<div class="a" style="left:1690px;top:472px;width:15px;height:15px;background:#e08a2a;border:1.5px solid #111"></div>
<div class="t" style="left:1708.0px;top:476.9px;font-size:10.8px;color:#c4c4c4;">bleed area</div>
<svg class="a" style="left:1866px;top:473px;" width="15" height="15" viewBox="0 0 15 15"><rect x="0.5" y="0.5" width="14" height="14" fill="#bdbdbd" stroke="#eee" stroke-width="1"/><rect x="3" y="3" width="9" height="9" fill="#8a8a8a"/><circle cx="7.5" cy="7.5" r="2" fill="#d8d8d8"/></svg>
<svg class="a" style="left:1885px;top:473px;" width="15" height="15" viewBox="0 0 15 15"><rect x="0" y="0" width="15" height="15" fill="#f0f0f0"/><path d="M1.5 1.5 H13.5 L7.5 7.5Z" fill="#e020e0"/><path d="M13.5 1.5 V13.5 L7.5 7.5Z" fill="#f0f020"/><path d="M13.5 13.5 H1.5 L7.5 7.5Z" fill="#080808"/><path d="M1.5 13.5 V1.5 L7.5 7.5Z" fill="#20e0e8"/></svg>
<div class="a" style="left:1672px;top:493px;width:233px;height:22px;background:#4b4b4b;"></div>
<div class="a" style="left:1672px;top:515px;width:233px;height:2px;background:#3e3e3e;"></div>
<div class="a" style="left:1690px;top:496px;width:15px;height:15px;background:#b4b8b6;border:1.5px solid #111"></div>
<div class="t" style="left:1708.0px;top:500.9px;font-size:10.8px;color:#c4c4c4;">safety distance</div>
<svg class="a" style="left:1866px;top:497px;" width="15" height="15" viewBox="0 0 15 15"><rect x="0.5" y="0.5" width="14" height="14" fill="#bdbdbd" stroke="#eee" stroke-width="1"/><rect x="3" y="3" width="9" height="9" fill="#8a8a8a"/><circle cx="7.5" cy="7.5" r="2" fill="#d8d8d8"/></svg>
<svg class="a" style="left:1885px;top:497px;" width="15" height="15" viewBox="0 0 15 15"><rect x="0" y="0" width="15" height="15" fill="#f0f0f0"/><path d="M1.5 1.5 H13.5 L7.5 7.5Z" fill="#e020e0"/><path d="M13.5 1.5 V13.5 L7.5 7.5Z" fill="#f0f020"/><path d="M13.5 13.5 H1.5 L7.5 7.5Z" fill="#080808"/><path d="M1.5 13.5 V1.5 L7.5 7.5Z" fill="#20e0e8"/></svg>
<div class="a" style="left:1672px;top:517px;width:233px;height:22px;background:#4b4b4b;"></div>
<div class="a" style="left:1672px;top:539px;width:233px;height:2px;background:#3e3e3e;"></div>
<div class="a" style="left:1690px;top:520px;width:15px;height:15px;background:#3e423e;border:1.5px solid #111"></div>
<div class="t" style="left:1708.0px;top:524.9px;font-size:10.8px;color:#c4c4c4;">infos</div>
<svg class="a" style="left:1866px;top:521px;" width="15" height="15" viewBox="0 0 15 15"><rect x="0.5" y="0.5" width="14" height="14" fill="#bdbdbd" stroke="#eee" stroke-width="1"/><rect x="3" y="3" width="9" height="9" fill="#8a8a8a"/><circle cx="7.5" cy="7.5" r="2" fill="#d8d8d8"/></svg>
<svg class="a" style="left:1885px;top:521px;" width="15" height="15" viewBox="0 0 15 15"><rect x="0" y="0" width="15" height="15" fill="#f0f0f0"/><path d="M1.5 1.5 H13.5 L7.5 7.5Z" fill="#e020e0"/><path d="M13.5 1.5 V13.5 L7.5 7.5Z" fill="#f0f020"/><path d="M13.5 13.5 H1.5 L7.5 7.5Z" fill="#080808"/><path d="M1.5 13.5 V1.5 L7.5 7.5Z" fill="#20e0e8"/></svg>
<div class="a" style="left:1672px;top:541px;width:233px;height:22px;background:#4b4b4b;"></div>
<div class="a" style="left:1672px;top:563px;width:233px;height:2px;background:#3e3e3e;"></div>
<svg class="a" style="left:1675px;top:547px;" width="6" height="10" viewBox="0 0 6 10"><path d="M0 0 L6 5 L0 10Z" fill="#c8c8c8"/></svg>
<svg class="a" style="left:1688px;top:546px;" width="17" height="13" viewBox="0 0 17 13"><path d="M0.5 2 H6 L7.5 3.5 H16 V12.5 H0.5Z" fill="#c8c8c8"/><rect x="0.5" y="4.5" width="15.5" height="8" fill="#d8d8d8"/></svg>
<div class="t" style="left:1708.0px;top:548.9px;font-size:10.8px;color:#c4c4c4;">Maschinenbauer</div>
<div class="a" style="left:1672px;top:565px;width:233px;height:22px;background:#4b4b4b;"></div>
<div class="a" style="left:1672px;top:587px;width:233px;height:2px;background:#3e3e3e;"></div>
<svg class="a" style="left:1675px;top:571px;" width="6" height="10" viewBox="0 0 6 10"><path d="M0 0 L6 5 L0 10Z" fill="#c8c8c8"/></svg>
<svg class="a" style="left:1688px;top:570px;" width="17" height="13" viewBox="0 0 17 13"><path d="M0.5 2 H6 L7.5 3.5 H16 V12.5 H0.5Z" fill="#c8c8c8"/><rect x="0.5" y="4.5" width="15.5" height="8" fill="#d8d8d8"/></svg>
<div class="t" style="left:1708.0px;top:572.9px;font-size:10.8px;color:#c4c4c4;">Bootsbauer</div>
<div class="a" style="left:1672px;top:589px;width:233px;height:22px;background:#4b4b4b;"></div>
<div class="a" style="left:1672px;top:611px;width:233px;height:2px;background:#3e3e3e;"></div>
<svg class="a" style="left:1673px;top:597px;" width="11" height="6" viewBox="0 0 11 6"><path d="M0 0 L11 0 L5.5 6Z" fill="#c8c8c8"/></svg>
<svg class="a" style="left:1688px;top:594px;" width="17" height="13" viewBox="0 0 17 13"><path d="M0.5 2 H6 L7.5 3.5 H16 V12.5 H0.5Z" fill="#c8c8c8"/><rect x="0.5" y="4.5" width="15.5" height="8" fill="#d8d8d8"/></svg>
<div class="t" style="left:1708.0px;top:596.9px;font-size:10.8px;color:#c4c4c4;">Menüservice</div>
<div class="a" style="left:1672px;top:613px;width:233px;height:22px;background:#4b4b4b;"></div>
<div class="a" style="left:1672px;top:635px;width:233px;height:2px;background:#3e3e3e;"></div>
<div class="a" style="left:1707px;top:616px;width:16px;height:16px;background:#2a7fa6;border:1.5px solid #111"></div>
<div class="t" style="left:1726.5px;top:620.9px;font-size:10.8px;color:#c4c4c4;">C=80 M=15 Y=20 K=30</div>
<svg class="a" style="left:1866px;top:617px;" width="15" height="15" viewBox="0 0 15 15"><rect x="0.5" y="0.5" width="14" height="14" fill="#c8c8c8" stroke="#eee" stroke-width="1"/><rect x="2" y="2" width="11" height="11" fill="#8c8c8c"/><rect x="2" y="2" width="1.2" height="1.2" fill="#777"/><rect x="2" y="6" width="1.2" height="1.2" fill="#777"/><rect x="2" y="10" width="1.2" height="1.2" fill="#777"/><rect x="4" y="4" width="1.2" height="1.2" fill="#777"/><rect x="4" y="8" width="1.2" height="1.2" fill="#777"/><rect x="4" y="12" width="1.2" height="1.2" fill="#777"/><rect x="6" y="2" width="1.2" height="1.2" fill="#777"/><rect x="6" y="6" width="1.2" height="1.2" fill="#777"/><rect x="6" y="10" width="1.2" height="1.2" fill="#777"/><rect x="8" y="4" width="1.2" height="1.2" fill="#777"/><rect x="8" y="8" width="1.2" height="1.2" fill="#777"/><rect x="8" y="12" width="1.2" height="1.2" fill="#777"/><rect x="10" y="2" width="1.2" height="1.2" fill="#777"/><rect x="10" y="6" width="1.2" height="1.2" fill="#777"/><rect x="10" y="10" width="1.2" height="1.2" fill="#777"/><rect x="12" y="4" width="1.2" height="1.2" fill="#777"/><rect x="12" y="8" width="1.2" height="1.2" fill="#777"/><rect x="12" y="12" width="1.2" height="1.2" fill="#777"/></svg>
<svg class="a" style="left:1885px;top:617px;" width="15" height="15" viewBox="0 0 15 15"><rect x="0" y="0" width="15" height="15" fill="#f0f0f0"/><path d="M1.5 1.5 H13.5 L7.5 7.5Z" fill="#e020e0"/><path d="M13.5 1.5 V13.5 L7.5 7.5Z" fill="#f0f020"/><path d="M13.5 13.5 H1.5 L7.5 7.5Z" fill="#080808"/><path d="M1.5 13.5 V1.5 L7.5 7.5Z" fill="#20e0e8"/></svg>
<div class="a" style="left:1672px;top:637px;width:233px;height:22px;background:#4b4b4b;"></div>
<div class="a" style="left:1672px;top:659px;width:233px;height:2px;background:#3e3e3e;"></div>
<div class="a" style="left:1707px;top:640px;width:16px;height:16px;background:#5bb848;border:1.5px solid #111"></div>
<div class="t" style="left:1726.5px;top:644.9px;font-size:10.8px;color:#c4c4c4;">C=65 M=0 Y=90 K=0</div>
<svg class="a" style="left:1866px;top:641px;" width="15" height="15" viewBox="0 0 15 15"><rect x="0.5" y="0.5" width="14" height="14" fill="#c8c8c8" stroke="#eee" stroke-width="1"/><rect x="2" y="2" width="11" height="11" fill="#8c8c8c"/><rect x="2" y="2" width="1.2" height="1.2" fill="#777"/><rect x="2" y="6" width="1.2" height="1.2" fill="#777"/><rect x="2" y="10" width="1.2" height="1.2" fill="#777"/><rect x="4" y="4" width="1.2" height="1.2" fill="#777"/><rect x="4" y="8" width="1.2" height="1.2" fill="#777"/><rect x="4" y="12" width="1.2" height="1.2" fill="#777"/><rect x="6" y="2" width="1.2" height="1.2" fill="#777"/><rect x="6" y="6" width="1.2" height="1.2" fill="#777"/><rect x="6" y="10" width="1.2" height="1.2" fill="#777"/><rect x="8" y="4" width="1.2" height="1.2" fill="#777"/><rect x="8" y="8" width="1.2" height="1.2" fill="#777"/><rect x="8" y="12" width="1.2" height="1.2" fill="#777"/><rect x="10" y="2" width="1.2" height="1.2" fill="#777"/><rect x="10" y="6" width="1.2" height="1.2" fill="#777"/><rect x="10" y="10" width="1.2" height="1.2" fill="#777"/><rect x="12" y="4" width="1.2" height="1.2" fill="#777"/><rect x="12" y="8" width="1.2" height="1.2" fill="#777"/><rect x="12" y="12" width="1.2" height="1.2" fill="#777"/></svg>
<svg class="a" style="left:1885px;top:641px;" width="15" height="15" viewBox="0 0 15 15"><rect x="0" y="0" width="15" height="15" fill="#f0f0f0"/><path d="M1.5 1.5 H13.5 L7.5 7.5Z" fill="#e020e0"/><path d="M13.5 1.5 V13.5 L7.5 7.5Z" fill="#f0f020"/><path d="M13.5 13.5 H1.5 L7.5 7.5Z" fill="#080808"/><path d="M1.5 13.5 V1.5 L7.5 7.5Z" fill="#20e0e8"/></svg>
<div class="a" style="left:1672px;top:661px;width:233px;height:22px;background:#4b4b4b;"></div>
<div class="a" style="left:1672px;top:683px;width:233px;height:2px;background:#3e3e3e;"></div>
<div class="a" style="left:1707px;top:664px;width:16px;height:16px;background:#e0282a;border:1.5px solid #111"></div>
<div class="t" style="left:1726.5px;top:668.9px;font-size:10.8px;color:#c4c4c4;">C=0 M=95 Y=90 K=0</div>
<svg class="a" style="left:1866px;top:665px;" width="15" height="15" viewBox="0 0 15 15"><rect x="0.5" y="0.5" width="14" height="14" fill="#c8c8c8" stroke="#eee" stroke-width="1"/><rect x="2" y="2" width="11" height="11" fill="#8c8c8c"/><rect x="2" y="2" width="1.2" height="1.2" fill="#777"/><rect x="2" y="6" width="1.2" height="1.2" fill="#777"/><rect x="2" y="10" width="1.2" height="1.2" fill="#777"/><rect x="4" y="4" width="1.2" height="1.2" fill="#777"/><rect x="4" y="8" width="1.2" height="1.2" fill="#777"/><rect x="4" y="12" width="1.2" height="1.2" fill="#777"/><rect x="6" y="2" width="1.2" height="1.2" fill="#777"/><rect x="6" y="6" width="1.2" height="1.2" fill="#777"/><rect x="6" y="10" width="1.2" height="1.2" fill="#777"/><rect x="8" y="4" width="1.2" height="1.2" fill="#777"/><rect x="8" y="8" width="1.2" height="1.2" fill="#777"/><rect x="8" y="12" width="1.2" height="1.2" fill="#777"/><rect x="10" y="2" width="1.2" height="1.2" fill="#777"/><rect x="10" y="6" width="1.2" height="1.2" fill="#777"/><rect x="10" y="10" width="1.2" height="1.2" fill="#777"/><rect x="12" y="4" width="1.2" height="1.2" fill="#777"/><rect x="12" y="8" width="1.2" height="1.2" fill="#777"/><rect x="12" y="12" width="1.2" height="1.2" fill="#777"/></svg>
<svg class="a" style="left:1885px;top:665px;" width="15" height="15" viewBox="0 0 15 15"><rect x="0" y="0" width="15" height="15" fill="#f0f0f0"/><path d="M1.5 1.5 H13.5 L7.5 7.5Z" fill="#e020e0"/><path d="M13.5 1.5 V13.5 L7.5 7.5Z" fill="#f0f020"/><path d="M13.5 13.5 H1.5 L7.5 7.5Z" fill="#080808"/><path d="M1.5 13.5 V1.5 L7.5 7.5Z" fill="#20e0e8"/></svg>
<div class="a" style="left:1672px;top:685px;width:233px;height:22px;background:#4b4b4b;"></div>
<div class="a" style="left:1672px;top:707px;width:233px;height:2px;background:#3e3e3e;"></div>
<div class="a" style="left:1707px;top:688px;width:16px;height:16px;background:#e89a20;border:1.5px solid #111"></div>
<div class="t" style="left:1726.5px;top:692.9px;font-size:10.8px;color:#c4c4c4;">C=10 M=50 Y=100 K=0</div>
<svg class="a" style="left:1866px;top:689px;" width="15" height="15" viewBox="0 0 15 15"><rect x="0.5" y="0.5" width="14" height="14" fill="#c8c8c8" stroke="#eee" stroke-width="1"/><rect x="2" y="2" width="11" height="11" fill="#8c8c8c"/><rect x="2" y="2" width="1.2" height="1.2" fill="#777"/><rect x="2" y="6" width="1.2" height="1.2" fill="#777"/><rect x="2" y="10" width="1.2" height="1.2" fill="#777"/><rect x="4" y="4" width="1.2" height="1.2" fill="#777"/><rect x="4" y="8" width="1.2" height="1.2" fill="#777"/><rect x="4" y="12" width="1.2" height="1.2" fill="#777"/><rect x="6" y="2" width="1.2" height="1.2" fill="#777"/><rect x="6" y="6" width="1.2" height="1.2" fill="#777"/><rect x="6" y="10" width="1.2" height="1.2" fill="#777"/><rect x="8" y="4" width="1.2" height="1.2" fill="#777"/><rect x="8" y="8" width="1.2" height="1.2" fill="#777"/><rect x="8" y="12" width="1.2" height="1.2" fill="#777"/><rect x="10" y="2" width="1.2" height="1.2" fill="#777"/><rect x="10" y="6" width="1.2" height="1.2" fill="#777"/><rect x="10" y="10" width="1.2" height="1.2" fill="#777"/><rect x="12" y="4" width="1.2" height="1.2" fill="#777"/><rect x="12" y="8" width="1.2" height="1.2" fill="#777"/><rect x="12" y="12" width="1.2" height="1.2" fill="#777"/></svg>
<svg class="a" style="left:1885px;top:689px;" width="15" height="15" viewBox="0 0 15 15"><rect x="0" y="0" width="15" height="15" fill="#f0f0f0"/><path d="M1.5 1.5 H13.5 L7.5 7.5Z" fill="#e020e0"/><path d="M13.5 1.5 V13.5 L7.5 7.5Z" fill="#f0f020"/><path d="M13.5 13.5 H1.5 L7.5 7.5Z" fill="#080808"/><path d="M1.5 13.5 V1.5 L7.5 7.5Z" fill="#20e0e8"/></svg>
<div class="a" style="left:1672px;top:709px;width:233px;height:22px;background:#4b4b4b;"></div>
<div class="a" style="left:1672px;top:731px;width:233px;height:2px;background:#3e3e3e;"></div>
<div class="a" style="left:1707px;top:712px;width:16px;height:16px;background:#8e8e8e;border:1.5px solid #111"></div>
<div class="t" style="left:1726.5px;top:716.9px;font-size:10.8px;color:#c4c4c4;">C=0 M=0 Y=0 K=60</div>
<svg class="a" style="left:1866px;top:713px;" width="15" height="15" viewBox="0 0 15 15"><rect x="0.5" y="0.5" width="14" height="14" fill="#c8c8c8" stroke="#eee" stroke-width="1"/><rect x="2" y="2" width="11" height="11" fill="#8c8c8c"/><rect x="2" y="2" width="1.2" height="1.2" fill="#777"/><rect x="2" y="6" width="1.2" height="1.2" fill="#777"/><rect x="2" y="10" width="1.2" height="1.2" fill="#777"/><rect x="4" y="4" width="1.2" height="1.2" fill="#777"/><rect x="4" y="8" width="1.2" height="1.2" fill="#777"/><rect x="4" y="12" width="1.2" height="1.2" fill="#777"/><rect x="6" y="2" width="1.2" height="1.2" fill="#777"/><rect x="6" y="6" width="1.2" height="1.2" fill="#777"/><rect x="6" y="10" width="1.2" height="1.2" fill="#777"/><rect x="8" y="4" width="1.2" height="1.2" fill="#777"/><rect x="8" y="8" width="1.2" height="1.2" fill="#777"/><rect x="8" y="12" width="1.2" height="1.2" fill="#777"/><rect x="10" y="2" width="1.2" height="1.2" fill="#777"/><rect x="10" y="6" width="1.2" height="1.2" fill="#777"/><rect x="10" y="10" width="1.2" height="1.2" fill="#777"/><rect x="12" y="4" width="1.2" height="1.2" fill="#777"/><rect x="12" y="8" width="1.2" height="1.2" fill="#777"/><rect x="12" y="12" width="1.2" height="1.2" fill="#777"/></svg>
<svg class="a" style="left:1885px;top:713px;" width="15" height="15" viewBox="0 0 15 15"><rect x="0" y="0" width="15" height="15" fill="#f0f0f0"/><path d="M1.5 1.5 H13.5 L7.5 7.5Z" fill="#e020e0"/><path d="M13.5 1.5 V13.5 L7.5 7.5Z" fill="#f0f020"/><path d="M13.5 13.5 H1.5 L7.5 7.5Z" fill="#080808"/><path d="M1.5 13.5 V1.5 L7.5 7.5Z" fill="#20e0e8"/></svg>
<div class="a" style="left:1905px;top:373px;width:15px;height:361px;background:#404040;"></div>
<svg class="a" style="left:1908px;top:377px;" width="9" height="6" viewBox="0 0 9 6"><path d="M0 6 L4.5 0 L9 6Z" fill="#6a6a6a"/></svg>
<svg class="a" style="left:1908px;top:720px;" width="9" height="6" viewBox="0 0 9 6"><path d="M0 0 L4.5 6 L9 0Z" fill="#6a6a6a"/></svg>
<div class="a" style="left:1667px;top:417px;width:244px;height:31px;background:transparent;border:5px solid #ff0a0a"></div>
<div class="a" style="left:1672px;top:733px;width:248px;height:26px;background:#474747;"></div>
<div class="a" style="left:1672px;top:733px;width:248px;height:1px;background:#3a3a3a;"></div>
<svg class="a" style="left:1765px;top:738px;" width="20" height="15" viewBox="0 0 20 15"><rect x="0.5" y="0.5" width="13" height="11" fill="#ddd"/><rect x="1.5" y="1.5" width="3" height="2.6" fill="#333"/><rect x="1.5" y="5.1" width="3" height="2.6" fill="#333"/><rect x="1.5" y="8.7" width="3" height="2.6" fill="#333"/><rect x="5.5" y="1.5" width="3" height="2.6" fill="#333"/><rect x="5.5" y="5.1" width="3" height="2.6" fill="#333"/><rect x="5.5" y="8.7" width="3" height="2.6" fill="#333"/><rect x="9.5" y="1.5" width="3" height="2.6" fill="#333"/><rect x="9.5" y="5.1" width="3" height="2.6" fill="#333"/><rect x="9.5" y="8.7" width="3" height="2.6" fill="#333"/><rect x="9.5" y="5.1" width="3" height="2.6" fill="#ddd"/><path d="M15 12 L19 12 L17 14Z" fill="#ddd"/></svg>
<svg class="a" style="left:1803px;top:739px;" width="17" height="13" viewBox="0 0 17 13"><path d="M0.5 2 H6 L7.5 3.5 H16 V12.5 H0.5Z" fill="#c8c8c8"/><rect x="0.5" y="4.5" width="15.5" height="8" fill="#d8d8d8"/></svg>
<svg class="a" style="left:1840px;top:738px;" width="14" height="14" viewBox="0 0 14 14"><path d="M0 0 H13 V13 H4 L0 9Z" fill="#9a9a9a"/><path d="M0 9 L4 9 L4 13Z" fill="#666"/></svg>
<svg class="a" style="left:1876px;top:737px;" width="16" height="16" viewBox="0 0 16 16"><path d="M5 2 V0.5 H11 V2" fill="none" stroke="#999" stroke-width="1.3"/><rect x="0.5" y="2.5" width="15" height="2.5" fill="#999"/><path d="M2 6 H14 L13 15 H3Z" fill="#999"/><path d="M6 7.5V13.5M8 7.5V13.5M10 7.5V13.5" stroke="#474747" stroke-width="1"/></svg>
<div class="a" style="left:1672px;top:756px;width:248px;height:3px;background:#2e2e2e;"></div>
<div class="a" style="left:1672px;top:759px;width:248px;height:21px;background:#333333;"></div>
<div class="a" style="left:1672px;top:759px;width:129px;height:21px;background:#3a3a3a;"></div>
<div class="t" style="left:1680.0px;top:763.8px;font-size:12.6px;color:#9a9a9a;font-weight:bold;letter-spacing:-0.29px;">Effekte</div>
<div class="t" style="left:1735.0px;top:763.8px;font-size:12.6px;color:#9a9a9a;font-weight:bold;letter-spacing:-0.58px;">Ausrichten</div>
<div class="a" style="left:1801px;top:759px;width:72px;height:21px;background:#4a4a4a;"></div>
<div class="t" style="left:1808.0px;top:763.8px;font-size:12.6px;color:#e8e8e8;font-weight:bold;letter-spacing:-0.43px;">Pathfinder</div>
<div class="a" style="left:1672px;top:780px;width:248px;height:225px;background:#4a4a4a;"></div>
<div class="t" style="left:1677.0px;top:788.9px;font-size:10.8px;color:#c4c4c4;letter-spacing:-0.54px;">Pfade:</div>
<svg class="a" style="left:1684px;top:805px;" width="19" height="19" viewBox="0 0 19 19"><rect x="1" y="13" width="4.5" height="4.5" fill="#d0d0d0"/><rect x="13" y="1" width="4.5" height="4.5" fill="#d0d0d0"/><path d="M3 12 C4 7 7 4 12 3" fill="none" stroke="#d0d0d0" stroke-width="1.3" stroke-dasharray="1.6 1.4"/></svg>
<svg class="a" style="left:1733px;top:805px;" width="21" height="19" viewBox="0 0 21 19"><ellipse cx="9.5" cy="11" rx="8" ry="6" fill="none" stroke="#d0d0d0" stroke-width="1.4"/><path d="M10 9 L16 2 M13 10 L19 3" stroke="#d0d0d0" stroke-width="1.4"/></svg>
<svg class="a" style="left:1783px;top:805px;" width="21" height="19" viewBox="0 0 21 19"><ellipse cx="10" cy="10" rx="8.5" ry="6.5" fill="none" stroke="#d0d0d0" stroke-width="1.4"/><rect x="6" y="2" width="4" height="4" fill="#d0d0d0"/><rect x="16" y="8" width="4" height="4" fill="#d0d0d0"/></svg>
<svg class="a" style="left:1833px;top:805px;" width="21" height="19" viewBox="0 0 21 19"><path d="M4 3 H1 V16 H4 M17 3 H20 V16 H17" fill="none" stroke="#d0d0d0" stroke-width="1.3"/><path d="M10.5 2 V16" stroke="#d0d0d0" stroke-width="1.2"/><rect x="8.5" y="1" width="4" height="4" fill="#d0d0d0"/><rect x="8.5" y="13" width="4" height="4" fill="#d0d0d0"/><path d="M6 14 L3 16 L6 18Z M15 1 L18 3 L15 5Z" fill="#d0d0d0"/></svg>
<div class="a" style="left:1677px;top:829px;width:235px;height:1px;background:#5a5a5a;"></div>
<div class="t" style="left:1677.0px;top:837.4px;font-size:10.8px;color:#c4c4c4;letter-spacing:-0.20px;">Pathfinder:</div>
<svg class="a" style="left:1684px;top:852px;" width="18" height="18" viewBox="0 0 18 18"><rect x="1" y="1" width="11" height="11" fill="#aaa" stroke="#ddd"/><rect x="6" y="6" width="11" height="11" fill="#aaa" stroke="#ddd"/><rect x="6" y="6" width="6" height="6" fill="#aaa"/></svg>
<svg class="a" style="left:1734px;top:852px;" width="18" height="18" viewBox="0 0 18 18"><rect x="1" y="1" width="11" height="11" fill="#888" stroke="#ddd"/><rect x="6" y="6" width="11" height="11" fill="#4a4a4a" stroke="#ddd"/></svg>
<svg class="a" style="left:1784px;top:852px;" width="18" height="18" viewBox="0 0 18 18"><rect x="1" y="1" width="11" height="11" fill="none" stroke="#bbb"/><rect x="6" y="6" width="11" height="11" fill="none" stroke="#bbb"/><rect x="6" y="6" width="6" height="6" fill="#ddd"/></svg>
<svg class="a" style="left:1834px;top:852px;" width="18" height="18" viewBox="0 0 18 18"><rect x="1" y="1" width="11" height="11" fill="#aaa" stroke="#ddd"/><rect x="6" y="6" width="11" height="11" fill="#aaa" stroke="#ddd"/><rect x="6" y="6" width="6" height="6" fill="#333"/></svg>
<svg class="a" style="left:1884px;top:852px;" width="18" height="18" viewBox="0 0 18 18"><rect x="1" y="1" width="11" height="11" fill="none" stroke="#777"/><rect x="6" y="6" width="11" height="11" fill="#bbb" stroke="#ddd"/><rect x="6" y="6" width="6" height="6" fill="#4a4a4a"/></svg>
<div class="a" style="left:1677px;top:878px;width:235px;height:1px;background:#5a5a5a;"></div>
<div class="t" style="left:1677.0px;top:884.6px;font-size:10.8px;color:#c4c4c4;letter-spacing:-0.09px;">Form konvertieren:</div>
<svg class="a" style="left:1684px;top:904px;" width="19" height="15" viewBox="0 0 19 15"><rect x="1" y="1" width="15" height="13" fill="none" stroke="#d0d0d0" stroke-width="1.3"/></svg>
<svg class="a" style="left:1734px;top:904px;" width="19" height="15" viewBox="0 0 19 15"><rect x="1" y="1" width="15" height="13" rx="3" fill="none" stroke="#d0d0d0" stroke-width="1.3"/></svg>
<svg class="a" style="left:1784px;top:904px;" width="19" height="15" viewBox="0 0 19 15"><path d="M5 1 H12 L16 5 V10 L12 14 H5 L1 10 V5Z" fill="none" stroke="#d0d0d0" stroke-width="1.3"/></svg>
<svg class="a" style="left:1834px;top:904px;" width="19" height="15" viewBox="0 0 19 15"><path d="M4 1 H13 A3 3 0 0 0 16 4 V11 A3 3 0 0 0 13 14 H4 A3 3 0 0 0 1 11 V4 A3 3 0 0 0 4 1Z" fill="none" stroke="#d0d0d0" stroke-width="1.3"/></svg>
<svg class="a" style="left:1884px;top:904px;" width="19" height="15" viewBox="0 0 19 15"><ellipse cx="9.5" cy="7.5" rx="9" ry="6" fill="none" stroke="#d0d0d0" stroke-width="1.3"/></svg>
<svg class="a" style="left:1684px;top:932px;" width="18" height="16" viewBox="0 0 18 16"><path d="M9 1 L17 14 H1Z" fill="none" stroke="#d0d0d0" stroke-width="1.3"/></svg>
<svg class="a" style="left:1734px;top:932px;" width="18" height="16" viewBox="0 0 18 16"><path d="M5 1 H13 L17 7.5 L13 14 H5 L1 7.5Z" fill="none" stroke="#d0d0d0" stroke-width="1.3"/></svg>
<svg class="a" style="left:1784px;top:932px;" width="18" height="16" viewBox="0 0 18 16"><path d="M1 14 L16 1" fill="none" stroke="#d0d0d0" stroke-width="1.3"/></svg>
<svg class="a" style="left:1834px;top:932px;" width="18" height="16" viewBox="0 0 18 16"><path d="M8.5 0 V16 M0.5 8 H16.5" fill="none" stroke="#d0d0d0" stroke-width="1.3"/></svg>
<div class="a" style="left:1677px;top:954px;width:235px;height:1px;background:#5a5a5a;"></div>
<div class="t" style="left:1677.0px;top:961.9px;font-size:10.8px;color:#c4c4c4;letter-spacing:-0.05px;">Punkt konvertieren:</div>
<svg class="a" style="left:1684px;top:978px;" width="19" height="19" viewBox="0 0 19 19"><rect x="2" y="2" width="5" height="5" fill="#d0d0d0"/><path d="M7 4.5 H17 M4.5 7 V18" stroke="#d0d0d0" stroke-width="1.2"/></svg>
<svg class="a" style="left:1734px;top:978px;" width="19" height="19" viewBox="0 0 19 19"><rect x="2" y="2" width="5" height="5" fill="#d0d0d0"/><path d="M7 4.5 H13 M4.5 7 V14" stroke="#d0d0d0" stroke-width="1.2"/><rect x="13" y="3" width="3" height="3" fill="#d0d0d0"/><rect x="3" y="14" width="3" height="3" fill="#d0d0d0"/></svg>
<svg class="a" style="left:1784px;top:978px;" width="19" height="19" viewBox="0 0 19 19"><rect x="6" y="6" width="5" height="5" fill="#d0d0d0"/><path d="M2 2 L15 15 M9 11 L13 17" stroke="#d0d0d0" stroke-width="1.2"/><rect x="1" y="1" width="3" height="3" fill="#d0d0d0"/><rect x="14" y="14" width="3" height="3" fill="#d0d0d0"/></svg>
<svg class="a" style="left:1834px;top:978px;" width="19" height="19" viewBox="0 0 19 19"><rect x="6" y="6" width="5" height="5" fill="#d0d0d0"/><path d="M2 16 C5 12 6 10 9 8 C12 6 14 4 17 3" fill="none" stroke="#d0d0d0" stroke-width="1.2"/><rect x="1" y="12" width="3" height="3" fill="#d0d0d0"/><rect x="14" y="1" width="3" height="3" fill="#d0d0d0"/></svg>
<div class="a" style="left:1672px;top:1003px;width:248px;height:4px;background:#2e2e2e;"></div>
<div class="a" style="left:1672px;top:1007px;width:248px;height:23px;background:#353535;"></div>
<div class="a" style="left:1672px;top:1007px;width:112px;height:23px;background:#4a4a4a;"></div>
<svg class="a" style="left:1678px;top:1012px;" width="7" height="11" viewBox="0 0 7 11"><path d="M0.8 4.5 L3.5 1.2 L6.2 4.5 M0.8 6.5 L3.5 9.8 L6.2 6.5" fill="none" stroke="#d0d0d0" stroke-width="1.4"/></svg>
<div class="t" style="left:1687.0px;top:1009.8px;font-size:12.6px;color:#e8e8e8;font-weight:bold;letter-spacing:-0.34px;">Zeichenformate</div>
<div class="a" style="left:1784px;top:1007px;width:90px;height:23px;background:#3a3a3a;"></div>
<div class="t" style="left:1793.0px;top:1009.8px;font-size:12.6px;color:#8a8a8a;font-weight:bold;letter-spacing:-0.58px;">Absatzformate</div>
<svg class="a" style="left:1898px;top:1012px;" width="18" height="11" viewBox="0 0 18 11"><path d="M0 3 L5 3 L2.5 6Z" fill="#c8c8c8"/><rect x="6" y="0.0" width="12" height="1.5" fill="#c8c8c8"/><rect x="6" y="2.6" width="12" height="1.5" fill="#c8c8c8"/><rect x="6" y="5.2" width="12" height="1.5" fill="#c8c8c8"/><rect x="6" y="7.800000000000001" width="12" height="1.5" fill="#c8c8c8"/></svg>
</body></html>
